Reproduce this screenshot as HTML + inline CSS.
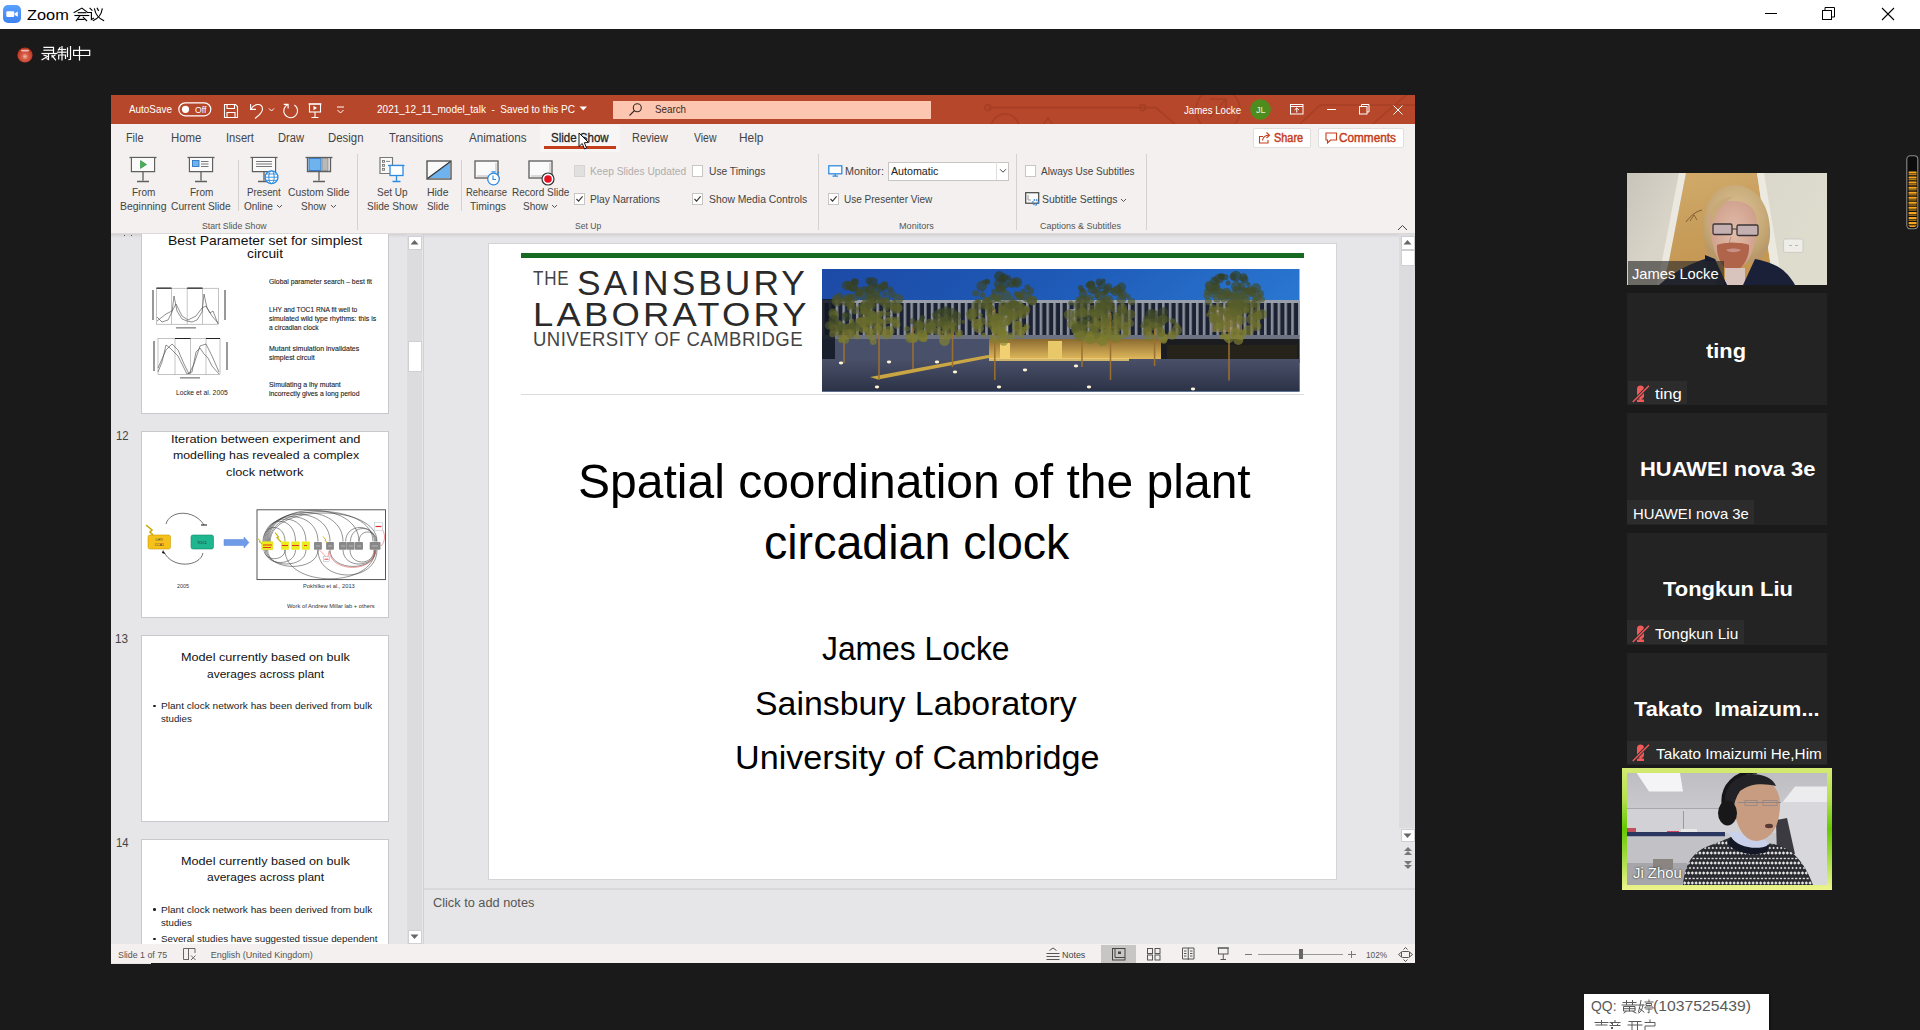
<!DOCTYPE html>
<html><head><meta charset="utf-8"><title>Zoom</title>
<style>
html,body{margin:0;padding:0;width:1920px;height:1030px;overflow:hidden;background:#1a1a1a;font-family:"Liberation Sans",sans-serif}
div,span,svg{position:absolute;display:block}
span{white-space:pre;transform-origin:0 0}
</style></head><body>
<div style="left:0px;top:0px;width:1920px;height:29px;background:#fff"></div>
<svg style="left:3px;top:5px;" width="18" height="18" viewBox="0 0 18 18"><defs><linearGradient id="zg" x1="0" y1="0" x2="0" y2="1"><stop offset="0" stop-color="#5aa0ff"/><stop offset="1" stop-color="#3d82f0"/></linearGradient></defs><rect x="0" y="0" width="18" height="18" rx="5" fill="url(#zg)"/><rect x="3.3" y="6.2" width="8" height="5.8" rx="1.3" fill="#fff"/><path d="M11.8 8.2 L14.8 6.4 V11.8 L11.8 10 Z" fill="#fff"/></svg>
<span style="left:27.2px;top:7.25px;font-size:15px;line-height:15px;color:#000;transform:scaleX(1.09);">Zoom</span>
<svg style="left:70px;top:2px;" width="40" height="26" viewBox="0 0 40 26"><g fill="none" stroke="#000" stroke-width="1.15" stroke-linecap="square"><path d="M4.1 10.5 L11.9 6.1 L17.7 10.5"/><path d="M8.3 10.7 H15.8"/><path d="M5 13.5 H18.7"/><path d="M9.5 14.2 L6.3 18.6"/><path d="M7.5 17.4 H14"/><path d="M13.3 15.3 L16.6 18.6"/><path d="M20 6.3 L22 8.3"/><path d="M17.6 10.5 H21.4 V17.5 L23.5 16.3"/><path d="M27.2 6.3 L28.4 8.4"/><path d="M24.5 7 C25.5 12 28 16 33.6 18.6"/><path d="M32.2 7 C31.5 12 29 16 23.3 18.6"/></g></svg>
<div style="left:1765px;top:13px;width:12px;height:1px;background:#000"></div>
<svg style="left:1822px;top:7px;" width="14" height="14" viewBox="0 0 14 14"><rect x="0.5" y="3.5" width="9" height="9" fill="none" stroke="#000" stroke-width="1"/><path d="M3 3.5 V0.5 H12.5 V10 H9.5" fill="none" stroke="#000" stroke-width="1"/></svg>
<svg style="left:1881px;top:7px;" width="14" height="14" viewBox="0 0 14 14"><path d="M1 1 L13 13 M13 1 L1 13" stroke="#000" stroke-width="1.1"/></svg>
<svg style="left:16px;top:46px;" width="18" height="18" viewBox="0 0 18 18"><defs><radialGradient id="rg" cx="0.5" cy="0.6" r="0.55"><stop offset="0" stop-color="#f0c0b0"/><stop offset="0.35" stop-color="#d9604a"/><stop offset="1" stop-color="#b8321e"/></radialGradient></defs><circle cx="9" cy="9" r="7.6" fill="url(#rg)"/><rect x="5" y="3.8" width="8" height="1.6" rx="0.8" fill="#f4d0c8" opacity="0.85"/></svg>
<svg style="left:38px;top:42px;" width="56" height="24" viewBox="0 0 56 24"><g fill="none" stroke="#fff" stroke-width="1.2" stroke-linecap="square"><path d="M6 5.3 H15.5 V11.5"/><path d="M6 8.2 H15.5"/><path d="M4 11.5 H18.8"/><path d="M10.5 11.5 V17.5 L9 16.8"/><path d="M6 13.2 L8.5 14"/><path d="M4 17.8 L9.5 14.5"/><path d="M17 13 L14 15"/><path d="M14 13.5 L17.5 17.8"/><path d="M22 5.5 L20.5 8"/><path d="M20.5 7.5 H27.5"/><path d="M19.5 10.2 H28"/><path d="M24 4.5 V17.8"/><path d="M20.7 17 V13 H27.5 V16.5"/><path d="M29.5 6 V14.5"/><path d="M32.5 4.5 V17.3 L31 17.5"/><path d="M35.6 8.4 H51.7 V13.5 H35.6 Z"/><path d="M41.5 4.8 V18"/></g></svg>
<div style="left:111px;top:95px;width:1304px;height:29px;background:#b7472a"></div>
<div style="left:111px;top:124px;width:1304px;height:110px;background:#f3f0ef"></div>
<div style="left:111px;top:234px;width:312px;height:711px;background:#e6e5e8"></div>
<div style="left:423px;top:234px;width:992px;height:711px;background:#e6e5e8"></div>
<div style="left:111px;top:944px;width:1304px;height:19px;background:#f3f0ef"></div>
<div style="left:111px;top:963px;width:40px;height:1px;background:#e8e4e2"></div>
<svg style="left:960px;top:95px;" width="455" height="29" viewBox="0 0 455 29"><g fill="none" stroke="#a63f25" stroke-width="1.6"><path d="M28 12.6 H182 L196 12.6 L215 29"/><circle cx="28" cy="12.6" r="3"/><circle cx="182.6" cy="12.6" r="3"/><circle cx="45" cy="33" r="14"/><path d="M82 31 L88 23 L94 31"/><circle cx="258" cy="15" r="22"/><path d="M250 4 H266 V20"/><path d="M266 4 L250 22"/><path d="M318 50 L360 10 H455"/><path d="M400 40 L452 -5"/><path d="M150 -2 L172 -10"/></g></svg>
<span style="left:129.4px;top:104.45px;font-size:11px;line-height:11px;color:#fff;transform:scaleX(0.9);">AutoSave</span>
<svg style="left:178px;top:102px;" width="34" height="15" viewBox="0 0 34 15"><rect x="0.8" y="0.8" width="32" height="13" rx="6.5" fill="none" stroke="#fff" stroke-width="1.2"/><circle cx="7.5" cy="7.3" r="3.6" fill="#fff"/></svg>
<span style="left:194.5px;top:105.22px;font-size:9.5px;line-height:9.5px;color:#fff;transform:scaleX(0.92);">Off</span>
<svg style="left:223px;top:103px;" width="16" height="16" viewBox="0 0 16 16"><g fill="none" stroke="#fff" stroke-width="1.1"><path d="M1.5 1.5 H12.5 L14.5 3.5 V14.5 H1.5 Z"/><path d="M4 1.5 V5.5 H11.5 V1.5"/><path d="M4 14.5 V9.5 H12 V14.5"/></g></svg>
<svg style="left:249px;top:103px;" width="16" height="17" viewBox="0 0 16 17"><g fill="none" stroke="#fff" stroke-width="1.1"><path d="M1.6 1 V6.4 H7"/><path d="M1.6 6.4 C5 0.5 13.5 -0.5 13.5 6 C13.5 9 10 12.5 6 15.5"/></g></svg>
<svg style="left:268px;top:107px;" width="7" height="6" viewBox="0 0 7 6"><path d="M1 1.5 L3.5 4 L6 1.5" fill="none" stroke="#fff" stroke-width="1"/></svg>
<svg style="left:282px;top:102px;" width="17" height="17" viewBox="0 0 17 17"><g fill="none" stroke="#fff" stroke-width="1.1"><path d="M6.1 2.4 A6.9 6.9 0 1 0 12.4 3"/><path d="M1.75 2.4 H6.1 V6.4"/></g></svg>
<svg style="left:308px;top:103px;" width="15" height="16" viewBox="0 0 15 16"><g fill="none" stroke="#fff" stroke-width="1.1"><path d="M0.5 1 H13.5"/><rect x="1.5" y="1" width="11" height="8"/><path d="M7 9 V14.5 M3.5 14.5 H10.5"/></g><path d="M5.5 2.8 L9 5 L5.5 7.2 Z" fill="#fff"/></svg>
<svg style="left:336px;top:105px;" width="9" height="10" viewBox="0 0 9 10"><path d="M1 2 H8" stroke="#fff" stroke-width="1"/><path d="M1.5 5 L4.5 8 L7.5 5" fill="none" stroke="#fff" stroke-width="1"/></svg>
<span style="left:377.3px;top:103.65px;font-size:11px;line-height:11px;color:#fff;transform:scaleX(0.91);">2021_12_11_model_talk  -  Saved to this PC</span>
<svg style="left:579px;top:106px;" width="9" height="6" viewBox="0 0 9 6"><path d="M0.5 0.5 H8 L4.25 4.5 Z" fill="#fff"/></svg>
<div style="left:612.5px;top:100.5px;width:318.5px;height:18.5px;background:#fdc6b1"></div>
<svg style="left:628px;top:102px;" width="15" height="15" viewBox="0 0 15 15"><g fill="none" stroke="#3a2a24" stroke-width="1.1"><circle cx="9.3" cy="5.7" r="4"/><path d="M6.5 8.5 L1.5 13.5"/></g></svg>
<span style="left:655px;top:104.15px;font-size:11px;line-height:11px;color:#3a2a24;transform:scaleX(0.89);">Search</span>
<span style="left:1184.3px;top:104.95px;font-size:11px;line-height:11px;color:#fff;transform:scaleX(0.88);">James Locke</span>
<svg style="left:1249.5px;top:99px;" width="21" height="21" viewBox="0 0 21 21"><circle cx="10.5" cy="10.5" r="10.3" fill="#4e8c1e"/></svg>
<span style="left:1255.5px;top:106.28px;font-size:8.5px;line-height:8.5px;color:#e8f0e0;transform:scaleX(1.06);">JL</span>
<svg style="left:1290px;top:104px;" width="14" height="11" viewBox="0 0 14 11"><g fill="none" stroke="#fff" stroke-width="1"><rect x="0.5" y="0.5" width="12.5" height="9.5"/><path d="M0.5 2.5 H13"/><path d="M6.75 8.5 V4 M4.5 6 L6.75 3.8 L9 6"/></g></svg>
<div style="left:1327px;top:109px;width:9px;height:1px;background:#fff"></div>
<svg style="left:1359px;top:104px;" width="11" height="11" viewBox="0 0 11 11"><g fill="none" stroke="#fff" stroke-width="1"><rect x="0.5" y="2.5" width="7.5" height="7.5"/><path d="M2.5 2.5 V0.5 H10 V8 H8"/></g></svg>
<svg style="left:1393px;top:105px;" width="10" height="10" viewBox="0 0 10 10"><path d="M0.5 0.5 L9.5 9.5 M9.5 0.5 L0.5 9.5" stroke="#fff" stroke-width="1"/></svg>
<div style="left:540px;top:125px;width:80px;height:27px;background:#f8f6f5"></div>
<span style="left:125.6px;top:131.7px;font-size:12px;line-height:12px;color:#444;transform:scaleX(0.9);">File</span>
<span style="left:170.6px;top:131.7px;font-size:12px;line-height:12px;color:#444;transform:scaleX(0.95);">Home</span>
<span style="left:226px;top:131.7px;font-size:12px;line-height:12px;color:#444;transform:scaleX(0.93);">Insert</span>
<span style="left:278px;top:131.7px;font-size:12px;line-height:12px;color:#444;transform:scaleX(0.93);">Draw</span>
<span style="left:328px;top:131.7px;font-size:12px;line-height:12px;color:#444;transform:scaleX(0.95);">Design</span>
<span style="left:389px;top:131.7px;font-size:12px;line-height:12px;color:#444;transform:scaleX(0.93);">Transitions</span>
<span style="left:468.75px;top:131.7px;font-size:12px;line-height:12px;color:#444;transform:scaleX(0.97);">Animations</span>
<span style="left:632px;top:131.7px;font-size:12px;line-height:12px;color:#444;transform:scaleX(0.91);">Review</span>
<span style="left:693.5px;top:131.7px;font-size:12px;line-height:12px;color:#444;transform:scaleX(0.87);">View</span>
<span style="left:738.5px;top:131.7px;font-size:12px;line-height:12px;color:#444;transform:scaleX(0.99);">Help</span>
<span style="left:550.8px;top:131.7px;font-size:12px;line-height:12px;color:#262626;transform:scaleX(0.96);-webkit-text-stroke:0.3px #262626;">Slide Show</span>
<div style="left:543.75px;top:145.8px;width:72.6px;height:3px;background:#c43e1c"></div>
<svg style="left:578px;top:132px;" width="12" height="19" viewBox="0 0 12 19"><path d="M1 1 V14.5 L4.2 11.5 L6.6 17 L8.6 16.1 L6.3 10.7 L10.5 10.5 Z" fill="#fff" stroke="#000" stroke-width="0.9" stroke-linejoin="round"/></svg>
<div style="left:1252.5px;top:127.5px;width:58px;height:20px;background:#fff;box-sizing:border-box;border:1px solid #e1dfdd;border-radius:2px"></div>
<svg style="left:1258px;top:131px;" width="14" height="13" viewBox="0 0 14 13"><g fill="none" stroke="#c43e1c" stroke-width="1.1"><path d="M5 5.5 H1.5 V12 H10 V9"/><path d="M4.5 9.5 C5 6 7.5 4.3 11 4.3"/><path d="M8.5 1.5 L11.5 4.3 L8.5 7"/></g></svg>
<span style="left:1274px;top:131.9px;font-size:12px;line-height:12px;color:#c43e1c;transform:scaleX(0.91);-webkit-text-stroke:0.45px #c43e1c;">Share</span>
<div style="left:1318.4px;top:127.5px;width:85.6px;height:20px;background:#fff;box-sizing:border-box;border:1px solid #e1dfdd;border-radius:2px"></div>
<svg style="left:1324.5px;top:132px;" width="13" height="13" viewBox="0 0 13 13"><path d="M1 1 H11.5 V8 H5.5 L2.5 11 V8 H1 Z" fill="none" stroke="#c43e1c" stroke-width="1.1"/></svg>
<span style="left:1339px;top:131.9px;font-size:12px;line-height:12px;color:#c43e1c;transform:scaleX(0.98);-webkit-text-stroke:0.45px #c43e1c;">Comments</span>
<svg style="left:129px;top:156px;" width="29" height="28" viewBox="0 0 29 28"><g fill="none" stroke="#5f5f5f" stroke-width="1.3"><path d="M0.5 1.5 H27.5"/><path d="M2.5 1.5 V15.5 H25.5 V1.5"/><path d="M14 15.5 V24.5 M8 25.5 H20"/></g><rect x="3" y="2" width="22" height="13" fill="#fafafa"/><path d="M11.5 4.6 L17.5 8.5 L11.5 12.4 Z" fill="#45b058" stroke="#2e8a3e" stroke-width="0.6"/></svg>
<span style="left:131.5px;top:187.25px;font-size:11px;line-height:11px;color:#444;transform:scaleX(0.91);">From</span>
<span style="left:120.2px;top:201.15px;font-size:11px;line-height:11px;color:#444;transform:scaleX(0.95);">Beginning</span>
<svg style="left:186.5px;top:156px;" width="29" height="28" viewBox="0 0 29 28"><g fill="none" stroke="#5f5f5f" stroke-width="1.3"><path d="M0.5 1.5 H27.5"/><path d="M2.5 1.5 V15.5 H25.5 V1.5"/><path d="M14 15.5 V24.5 M8 25.5 H20"/></g><rect x="3" y="2" width="22" height="13" fill="#fafafa"/><rect x="5.5" y="4.5" width="6.5" height="6" fill="#6fb3ee" stroke="#2f76c3" stroke-width="0.9"/><path d="M14 5.5 H21.5 M14 8 H21.5 M14 10.5 H21.5" stroke="#6a6a6a" stroke-width="0.9"/></svg>
<span style="left:189.5px;top:187.25px;font-size:11px;line-height:11px;color:#444;transform:scaleX(0.91);">From</span>
<span style="left:171.2px;top:201.15px;font-size:11px;line-height:11px;color:#444;transform:scaleX(0.93);">Current Slide</span>
<div style="left:237.5px;top:160px;width:1px;height:50.5px;background:#d4d2d0"></div>
<svg style="left:249.5px;top:156px;" width="32" height="29" viewBox="0 0 32 29"><g fill="none" stroke="#5f5f5f" stroke-width="1.3"><path d="M0.5 1.5 H27.5"/><path d="M2.5 1.5 V15.5 H25.5 V1.5"/><path d="M14 15.5 V24.5 M8 25.5 H18"/></g><rect x="3" y="2" width="22" height="13" fill="#fafafa"/><path d="M6 5.5 H22 M6 8 H22 M6 10.5 H22" stroke="#6a6a6a" stroke-width="0.9"/><circle cx="21.5" cy="21.2" r="6.4" fill="#fff" stroke="#2f8be0" stroke-width="1.3"/><path d="M15.1 21.2 H27.9 M16.4 18 H26.6 M16.4 24.4 H26.6" stroke="#2f8be0" stroke-width="0.9"/><ellipse cx="21.5" cy="21.2" rx="2.7" ry="6.4" fill="none" stroke="#2f8be0" stroke-width="1"/></svg>
<span style="left:246.7px;top:187.25px;font-size:11px;line-height:11px;color:#444;transform:scaleX(0.89);">Present</span>
<span style="left:243.5px;top:201.15px;font-size:11px;line-height:11px;color:#444;transform:scaleX(0.91);">Online</span>
<svg style="left:276px;top:204px;" width="7" height="5" viewBox="0 0 7 5"><path d="M1 1 L3.5 3.5 L6 1" fill="none" stroke="#555" stroke-width="1"/></svg>
<svg style="left:304.5px;top:156px;" width="29" height="28" viewBox="0 0 29 28"><g fill="none" stroke="#5f5f5f" stroke-width="1.3"><path d="M0.5 1.5 H27.5"/><path d="M2.5 1.5 V15.5 H25.5 V1.5"/><path d="M14 15.5 V24.5 M8 25.5 H20"/></g><rect x="4" y="2.5" width="12" height="12" fill="#6fb3ee" stroke="#2f76c3" stroke-width="0.9"/><rect x="17" y="2.5" width="6" height="12" fill="#b9b9b9" stroke="#8a8a8a" stroke-width="0.8"/></svg>
<span style="left:287.7px;top:187.25px;font-size:11px;line-height:11px;color:#444;transform:scaleX(0.94);">Custom Slide</span>
<span style="left:300.8px;top:201.15px;font-size:11px;line-height:11px;color:#444;transform:scaleX(0.91);">Show</span>
<svg style="left:330px;top:204px;" width="7" height="5" viewBox="0 0 7 5"><path d="M1 1 L3.5 3.5 L6 1" fill="none" stroke="#555" stroke-width="1"/></svg>
<span style="left:201.8px;top:222.05px;font-size:9px;line-height:9px;color:#555;transform:scaleX(0.97);">Start Slide Show</span>
<div style="left:357.3px;top:154px;width:1px;height:76px;background:#d4d2d0"></div>
<svg style="left:379px;top:156px;" width="27" height="27" viewBox="0 0 27 27"><path d="M1 1.5 H13.5 V17.5 H1 Z" fill="#fafafa" stroke="#777" stroke-width="1.2"/><g fill="none" stroke="#777" stroke-width="0.9"><rect x="3.5" y="4.5" width="2" height="1.8"/><rect x="3.5" y="8.5" width="2" height="1.8"/><rect x="3.5" y="12.5" width="2" height="1.8"/><path d="M7 5.4 H11"/></g><g fill="none" stroke="#2f8be0" stroke-width="1.3"><path d="M9 9.5 H25.5"/><rect x="11" y="9.5" width="13" height="10" fill="#fff"/><path d="M17.5 19.5 V25 M13.5 25.5 H21.5"/></g></svg>
<span style="left:377px;top:187.25px;font-size:11px;line-height:11px;color:#444;transform:scaleX(0.91);">Set Up</span>
<span style="left:367.4px;top:201.15px;font-size:11px;line-height:11px;color:#444;transform:scaleX(0.92);">Slide Show</span>
<svg style="left:425.5px;top:159.5px;" width="26" height="20" viewBox="0 0 26 20"><rect x="1" y="1" width="24" height="18" fill="#fafafa" stroke="#555" stroke-width="1.4"/><path d="M2 18 L24 2 V18 Z" fill="#6fb3ee"/><path d="M1.5 18.5 L24.5 1.5" stroke="#333" stroke-width="1.2"/></svg>
<span style="left:427.3px;top:187.25px;font-size:11px;line-height:11px;color:#444;transform:scaleX(0.95);">Hide</span>
<span style="left:427.3px;top:201.15px;font-size:11px;line-height:11px;color:#444;transform:scaleX(0.9);">Slide</span>
<div style="left:460.5px;top:160px;width:1px;height:50.5px;background:#d4d2d0"></div>
<svg style="left:474px;top:159.5px;" width="30" height="26" viewBox="0 0 30 26"><rect x="1" y="1" width="23" height="17" fill="#fafafa" stroke="#666" stroke-width="1.4"/><path d="M3 16 H22 V3" fill="none" stroke="#bbb" stroke-width="1"/><circle cx="19.5" cy="19" r="5.8" fill="#fff" stroke="#2f8be0" stroke-width="1.3"/><path d="M19 15.5 V19.5 H22" fill="none" stroke="#2f8be0" stroke-width="1.1"/><path d="M17.5 11.8 H21.5 M23.5 13.5 L25 12" stroke="#2f8be0" stroke-width="1.2"/></svg>
<span style="left:466.3px;top:187.25px;font-size:11px;line-height:11px;color:#444;transform:scaleX(0.86);">Rehearse</span>
<span style="left:469.6px;top:201.15px;font-size:11px;line-height:11px;color:#444;transform:scaleX(0.94);">Timings</span>
<svg style="left:527.5px;top:159.5px;" width="30" height="26" viewBox="0 0 30 26"><rect x="1" y="1" width="23" height="17" fill="#fafafa" stroke="#666" stroke-width="1.4"/><path d="M3 16 H22 V3" fill="none" stroke="#bbb" stroke-width="1"/><circle cx="20" cy="19" r="6" fill="#fff" stroke="#333" stroke-width="1.2"/><circle cx="20" cy="19" r="3.8" fill="#e81123"/></svg>
<span style="left:511.9px;top:187.25px;font-size:11px;line-height:11px;color:#444;transform:scaleX(0.91);">Record Slide</span>
<span style="left:523px;top:201.15px;font-size:11px;line-height:11px;color:#444;transform:scaleX(0.91);">Show</span>
<svg style="left:551px;top:204px;" width="7" height="5" viewBox="0 0 7 5"><path d="M1 1 L3.5 3.5 L6 1" fill="none" stroke="#555" stroke-width="1"/></svg>
<div style="left:573.75px;top:165.2px;width:11px;height:11.5px;background:#e2e0df;box-sizing:border-box;border:1px solid #d6d4d3"></div>
<span style="left:589.5px;top:166.05px;font-size:11px;line-height:11px;color:#b0aeac;transform:scaleX(0.93);">Keep Slides Updated</span>
<div style="left:692.4px;top:165.2px;width:11px;height:11.5px;background:#fff;box-sizing:border-box;border:1px solid #c8c6c4"></div>
<span style="left:708.7px;top:166.05px;font-size:11px;line-height:11px;color:#444;transform:scaleX(0.93);">Use Timings</span>
<div style="left:573.75px;top:193.2px;width:11px;height:11.5px;background:#fff;box-sizing:border-box;border:1px solid #c8c6c4"></div>
<svg style="left:573.75px;top:193.2px;" width="11" height="11.5" viewBox="0 0 11 11.5"><path d="M2.5 6 L4.6 8.2 L8.6 3.4" fill="none" stroke="#333" stroke-width="1.1"/></svg>
<span style="left:589.5px;top:194.05px;font-size:11px;line-height:11px;color:#444;transform:scaleX(0.93);">Play Narrations</span>
<div style="left:692.4px;top:193.2px;width:11px;height:11.5px;background:#fff;box-sizing:border-box;border:1px solid #c8c6c4"></div>
<svg style="left:692.4px;top:193.2px;" width="11" height="11.5" viewBox="0 0 11 11.5"><path d="M2.5 6 L4.6 8.2 L8.6 3.4" fill="none" stroke="#333" stroke-width="1.1"/></svg>
<span style="left:708.7px;top:194.05px;font-size:11px;line-height:11px;color:#444;transform:scaleX(0.94);">Show Media Controls</span>
<span style="left:575px;top:222.05px;font-size:9px;line-height:9px;color:#555;transform:scaleX(0.95);">Set Up</span>
<div style="left:818.3px;top:154px;width:1px;height:76px;background:#d4d2d0"></div>
<svg style="left:827.5px;top:165px;" width="15" height="12" viewBox="0 0 15 12"><rect x="0.8" y="0.8" width="13" height="8" fill="#fff" stroke="#2f8be0" stroke-width="1.3"/><path d="M7.2 9 V11 M4.5 11.2 H10" stroke="#2f8be0" stroke-width="1.3"/></svg>
<span style="left:845px;top:165.65px;font-size:11px;line-height:11px;color:#444;transform:scaleX(0.98);">Monitor:</span>
<div style="left:887.9px;top:161.5px;width:121px;height:19.3px;background:#fff;box-sizing:border-box;border:1px solid #c8c6c4"></div>
<div style="left:996.2px;top:162px;width:1px;height:18.3px;background:#e0dedd"></div>
<svg style="left:999px;top:168px;" width="8" height="6" viewBox="0 0 8 6"><path d="M1 1.2 L4 4.2 L7 1.2" fill="none" stroke="#444" stroke-width="1"/></svg>
<span style="left:890.5px;top:165.65px;font-size:11px;line-height:11px;color:#222;transform:scaleX(0.97);">Automatic</span>
<div style="left:828px;top:193.2px;width:11px;height:11.5px;background:#fff;box-sizing:border-box;border:1px solid #c8c6c4"></div>
<svg style="left:828px;top:193.2px;" width="11" height="11.5" viewBox="0 0 11 11.5"><path d="M2.5 6 L4.6 8.2 L8.6 3.4" fill="none" stroke="#333" stroke-width="1.1"/></svg>
<span style="left:844.3px;top:194.05px;font-size:11px;line-height:11px;color:#444;transform:scaleX(0.91);">Use Presenter View</span>
<span style="left:899px;top:222.05px;font-size:9px;line-height:9px;color:#555;transform:scaleX(1.01);">Monitors</span>
<div style="left:1015.5px;top:154px;width:1px;height:76px;background:#d4d2d0"></div>
<div style="left:1025px;top:165.2px;width:11px;height:11.5px;background:#fff;box-sizing:border-box;border:1px solid #c8c6c4"></div>
<span style="left:1041.25px;top:166.05px;font-size:11px;line-height:11px;color:#444;transform:scaleX(0.91);">Always Use Subtitles</span>
<svg style="left:1024.5px;top:192px;" width="15" height="14" viewBox="0 0 15 14"><rect x="0.7" y="0.7" width="13" height="10.5" fill="#fafafa" stroke="#444" stroke-width="1.2"/><path d="M3 3 V8 H6" fill="none" stroke="#888" stroke-width="0.8"/><circle cx="10.5" cy="10.3" r="2.6" fill="none" stroke="#2f8be0" stroke-width="1.5" stroke-dasharray="1.6 0.9"/></svg>
<span style="left:1041.9px;top:194.05px;font-size:11px;line-height:11px;color:#444;transform:scaleX(0.95);">Subtitle Settings</span>
<svg style="left:1120px;top:198px;" width="7" height="5" viewBox="0 0 7 5"><path d="M1 1 L3.5 3.5 L6 1" fill="none" stroke="#555" stroke-width="1"/></svg>
<span style="left:1040px;top:222.05px;font-size:9px;line-height:9px;color:#555;transform:scaleX(1);">Captions &amp; Subtitles</span>
<div style="left:1145.8px;top:154px;width:1px;height:76px;background:#d4d2d0"></div>
<svg style="left:1397px;top:224px;" width="11" height="7" viewBox="0 0 11 7"><path d="M1 6 L5.5 1.5 L10 6" fill="none" stroke="#444" stroke-width="1"/></svg>
<div style="left:111px;top:233px;width:1304px;height:1px;background:#dcdad9"></div>
<div style="left:111px;top:234px;width:1304px;height:4px;background:linear-gradient(#d3d2d5,rgba(230,229,232,0))"></div>
<div style="left:111px;top:234px;width:296px;height:710px;overflow:hidden">
<div style="left:30px;top:-7px;width:248px;height:187px;background:#fff;box-sizing:border-box;border:1px solid #c9c8cb"></div>
<div style="left:30px;top:197px;width:248px;height:187px;background:#fff;box-sizing:border-box;border:1px solid #c9c8cb"></div>
<div style="left:30px;top:401px;width:248px;height:187px;background:#fff;box-sizing:border-box;border:1px solid #c9c8cb"></div>
<div style="left:30px;top:605px;width:248px;height:187px;background:#fff;box-sizing:border-box;border:1px solid #c9c8cb"></div>
<span style="left:4.5px;top:194.95px;font-size:13px;line-height:13px;color:#444;transform:scaleX(0.87);">12</span>
<span style="left:4px;top:398.45px;font-size:13px;line-height:13px;color:#444;transform:scaleX(0.9);">13</span>
<span style="left:4.5px;top:602.45px;font-size:13px;line-height:13px;color:#444;transform:scaleX(0.87);">14</span>
<div style="left:12.5px;top:0.5px;width:1.2px;height:1.2px;background:#555"></div>
<div style="left:19.5px;top:0.5px;width:1.2px;height:1.2px;background:#555"></div>
<span style="left:57.25px;top:-0.05px;font-size:13px;line-height:13px;color:#111;transform:scaleX(1.07);">Best Parameter set for simplest</span>
<span style="left:136px;top:12.95px;font-size:13px;line-height:13px;color:#111;transform:scaleX(1.06);">circuit</span>
<span style="left:157.8px;top:45.16px;font-size:6.4px;line-height:6.4px;color:#222;transform:scaleX(1.07);-webkit-text-stroke:0.1px #222;">Global parameter search – best fit</span>
<span style="left:157.8px;top:72.96px;font-size:6.4px;line-height:6.4px;color:#222;transform:scaleX(1.04);-webkit-text-stroke:0.1px #222;">LHY and TOC1 RNA fit well to</span>
<span style="left:157.8px;top:82.06px;font-size:6.4px;line-height:6.4px;color:#222;transform:scaleX(1.09);-webkit-text-stroke:0.1px #222;">simulated wild type rhythms: this is</span>
<span style="left:157.8px;top:90.96px;font-size:6.4px;line-height:6.4px;color:#222;transform:scaleX(1.05);-webkit-text-stroke:0.1px #222;">a circadian clock</span>
<span style="left:157.8px;top:111.76px;font-size:6.4px;line-height:6.4px;color:#222;transform:scaleX(1.1);-webkit-text-stroke:0.1px #222;">Mutant simulation invalidates</span>
<span style="left:157.8px;top:120.86px;font-size:6.4px;line-height:6.4px;color:#222;transform:scaleX(1.09);-webkit-text-stroke:0.1px #222;">simplest circuit</span>
<span style="left:157.8px;top:148.26px;font-size:6.4px;line-height:6.4px;color:#222;transform:scaleX(1.08);-webkit-text-stroke:0.1px #222;">Simulating a lhy mutant</span>
<span style="left:157.8px;top:157.36px;font-size:6.4px;line-height:6.4px;color:#222;transform:scaleX(1.07);-webkit-text-stroke:0.1px #222;">incorrectly gives a long period</span>
<span style="left:65px;top:154.55px;font-size:7px;line-height:7px;color:#222;transform:scaleX(0.97);">Locke et al. 2005</span>
<svg style="left:41px;top:52px;" width="90" height="100" viewBox="0 0 90 100"><g fill="none" stroke="#888" stroke-width="0.5"><rect x="4.5" y="2.2" width="62" height="36"/><path d="M19.5 2.2 V38.2 M35.2 2.2 V38.2 M50.5 2.2 V38.2"/><rect x="6" y="52.5" width="62" height="36"/><path d="M23 52.5 V88.5 M38.5 52.5 V88.5 M54 52.5 V88.5"/></g><path d="M4.5 2.2 H19.5 M35.2 2.2 H50.5" stroke="#222" stroke-width="1.2"/><path d="M23 52.5 H38.5 M54 52.5 H68" stroke="#222" stroke-width="1.2"/><g fill="none" stroke="#444" stroke-width="0.6"><path d="M5 31 L10 36 L16 34 L20 26 L22 10 L25 25 L30 33 L35 35 L40 36 L45 34 L50 26 L52 8 L55 22 L58 27 L61 25 L66 38"/><path d="M5 35 L14 28 L20 25 L24 18 L30 30 L36 34 L44 30 L50 22 L54 20 L60 30 L66 37"/><path d="M6 86 L10 76 L14 59 L18 62 L22 66 L26 70 L30 78 L35 88 L40 86 L44 66 L48 62 L52 68 L56 72 L60 80 L67 88"/><path d="M6 82 L14 64 L20 58 L26 64 L32 78 L37 88 L42 78 L48 60 L54 58 L60 70 L67 86"/></g><g fill="#999"><rect x="0" y="4" width="2" height="30"/><rect x="72" y="4" width="2" height="30"/><rect x="1" y="55" width="2" height="30"/><rect x="74" y="56" width="2" height="28"/><rect x="24" y="41" width="20" height="1.6"/><rect x="28" y="91" width="20" height="1.6"/></g></svg>
<span style="left:59.7px;top:199.72px;font-size:11.5px;line-height:11.5px;color:#111;transform:scaleX(1.11);">Iteration between experiment and</span>
<span style="left:61.7px;top:216.03px;font-size:11.5px;line-height:11.5px;color:#111;transform:scaleX(1.07);">modelling has revealed a complex</span>
<span style="left:115.4px;top:232.53px;font-size:11.5px;line-height:11.5px;color:#111;transform:scaleX(1.11);">clock network</span>
<svg style="left:33px;top:271px;" width="245" height="80" viewBox="0 0 245 80"><path d="M22 19 C26 5 50 4 60 20" fill="none" stroke="#333" stroke-width="0.7"/><path d="M57 20 H63" stroke="#111" stroke-width="1"/><path d="M59 48 C56 62 28 64 20 47" fill="none" stroke="#333" stroke-width="0.7"/><path d="M19 45 L21 49 L18 48Z" fill="#111"/><rect x="4" y="30" width="22.5" height="14" rx="2" fill="#f6c11a" stroke="#c99a00" stroke-width="0.6"/><rect x="47" y="30" width="22.5" height="14" rx="2" fill="#1db68f" stroke="#138a6a" stroke-width="0.6"/><path d="M2 20 L8 25 L6 27 L9 30" fill="none" stroke="#c9a800" stroke-width="1.6"/><text x="15.3" y="36" font-size="3.4" text-anchor="middle" fill="#333" font-family="Liberation Sans">LHY/</text><text x="15.3" y="40.5" font-size="3.4" text-anchor="middle" fill="#333" font-family="Liberation Sans">CCA1</text><text x="58" y="38.5" font-size="3.6" text-anchor="middle" fill="#222" font-family="Liberation Sans">TOC1</text><path d="M80 34.5 H100 V32 L105 37.5 L100 43 V40.5 H80 Z" fill="#6f9ae8" stroke="#5a86d8" stroke-width="0.5"/><rect x="113" y="4.8" width="128.5" height="69.8" fill="#fff" stroke="#444" stroke-width="0.9"/><g fill="none" stroke="#3a3a3a" stroke-width="0.55"><path d="M119.0 36.5 C119.0 17.8 141.0 17.8 141.0 36.5"/><path d="M119.9 36.5 C119.9 9.6 151.5 9.6 151.5 36.5"/><path d="M120.8 36.5 C120.8 6.5 162.0 6.5 162.0 36.5"/><path d="M121.7 36.5 C121.7 3.4 174.0 3.4 174.0 36.5"/><path d="M122.6 36.5 C122.6 0.2 186.0 0.2 186.0 36.5"/><path d="M123.5 36.5 C123.5 -2.3 199.0 -2.3 199.0 36.5"/><path d="M124.4 36.5 C124.4 -5.0 215.0 -5.0 215.0 36.5"/><path d="M125.3 36.5 C125.3 -3.5 229.0 -3.5 229.0 36.5"/><path d="M126.2 36.5 C126.2 -1.5 233.0 -1.5 233.0 36.5"/><path d="M120.0 44.7 C120.0 56.6 141.0 56.6 141.0 44.7"/><path d="M121.2 44.7 C121.2 61.8 151.5 61.8 151.5 44.7"/><path d="M122.4 44.7 C122.4 63.8 162.0 63.8 162.0 44.7"/><path d="M123.6 44.7 C123.6 67.0 174.0 67.0 174.0 44.7"/><path d="M141.0 44.7 C141.0 83.5 231.0 83.5 231.0 44.7"/><path d="M174.0 44.7 C174.0 78.4 233.0 78.4 233.0 44.7"/><path d="M186.0 44.7 C186.0 67.0 232.0 67.0 232.0 44.7"/><path d="M199.0 44.7 C199.0 63.8 231.0 63.8 231.0 44.7"/><path d="M206.0 44.7 C206.0 61.1 230.0 61.1 230.0 44.7"/><path d="M201.6 36.5 C201.6 17.8 230.5 17.8 230.5 36.5"/><path d="M206.5 36.5 C206.5 19.2 231.5 19.2 231.5 36.5"/><path d="M215.0 36.5 C215.0 23.8 232.5 23.8 232.5 36.5"/></g><path d="M238 24 C242 30 241 36 237.3 41" fill="none" stroke="#e84040" stroke-width="0.5"/><path d="M231 45.8 C231 68 186 68 185.3 45.8" fill="none" stroke="#e84040" stroke-width="0.5"/><path d="M182 51.7 L176 45.5 M184 51.7 L185 46" fill="none" stroke="#e84040" stroke-width="0.5"/><rect x="117.7" y="36.5" width="11.2" height="8.2" rx="0.8" fill="#ecec1a" stroke="#b0b000" stroke-width="0.3"/><rect x="137" y="36.5" width="7.9" height="8.2" rx="0.8" fill="#ecec1a"/><rect x="147.2" y="36.5" width="8.5" height="8.2" rx="0.8" fill="#ecec1a"/><rect x="157.7" y="36.5" width="8.1" height="8.2" rx="0.8" fill="#ecec1a"/><path d="M119 40 H128 M119 42.5 H127 M138 40.5 H144 M148 40.5 H155 M160 40.5 H163" stroke="#e02020" stroke-width="0.9"/><rect x="170" y="37.1" width="7.9" height="7.6" rx="0.8" fill="#888"/><rect x="182.1" y="37.1" width="7.8" height="7.6" rx="0.8" fill="#888"/><rect x="195" y="37.1" width="7.7" height="7.6" rx="0.8" fill="#888"/><rect x="202.7" y="37.1" width="7.8" height="7.6" rx="0.8" fill="#8a8a8a"/><rect x="210.9" y="37.1" width="8.1" height="7.6" rx="0.8" fill="#888"/><rect x="225.7" y="37.1" width="10.8" height="7.6" rx="0.8" fill="#888"/><path d="M172 41 H176 M184 41 H188 M197 41 H201 M205 41 H209 M213 41 H217 M228 41 H234" stroke="#ccc" stroke-width="0.7"/><path d="M113 33 L116.5 36 L115 36.5 L118 39" fill="none" stroke="#c8b400" stroke-width="1"/><path d="M131 27.5 L134.5 32 L133 32.5 L137 37" fill="none" stroke="#c8b400" stroke-width="1.2"/><path d="M179 31.5 L182 35 L181 35.5 L183.5 38" fill="none" stroke="#c8b400" stroke-width="0.9"/><rect x="230.3" y="17.5" width="8.2" height="7.8" fill="#fff" stroke="#9ab" stroke-width="0.4"/><path d="M231.5 21.5 H237.5" stroke="#e03030" stroke-width="1.2"/><rect x="179.4" y="51.7" width="6.2" height="5" fill="#fff" stroke="#99a" stroke-width="0.4"/><path d="M180.5 54.2 H184.5" stroke="#e04040" stroke-width="1"/></svg>
<span style="left:65.7px;top:349.75px;font-size:5px;line-height:5px;color:#333;transform:scaleX(1.07);">2005</span>
<span style="left:192px;top:349.75px;font-size:5px;line-height:5px;color:#333;transform:scaleX(1.15);">Pokhilko et al., 2013</span>
<span style="left:175.7px;top:370.08px;font-size:5.2px;line-height:5.2px;color:#333;transform:scaleX(1.11);">Work of Andrew Millar lab + others</span>
<span style="left:70.2px;top:418.43px;font-size:11.5px;line-height:11.5px;color:#111;transform:scaleX(1.1);">Model currently based on bulk</span>
<span style="left:95.5px;top:434.93px;font-size:11.5px;line-height:11.5px;color:#111;transform:scaleX(1.04);">averages across plant</span>
<div style="left:42px;top:470.5px;width:2.5px;height:2.5px;background:#222;border-radius:50%"></div>
<span style="left:50.3px;top:468.35px;font-size:9px;line-height:9px;color:#222;transform:scaleX(1.12);">Plant clock network has been derived from bulk</span>
<span style="left:50.3px;top:481.35px;font-size:9px;line-height:9px;color:#222;transform:scaleX(1.08);">studies</span>
<span style="left:70.3px;top:622.02px;font-size:11.5px;line-height:11.5px;color:#111;transform:scaleX(1.1);">Model currently based on bulk</span>
<span style="left:95.7px;top:638.43px;font-size:11.5px;line-height:11.5px;color:#111;transform:scaleX(1.04);">averages across plant</span>
<div style="left:42px;top:674px;width:2.5px;height:2.5px;background:#222;border-radius:50%"></div>
<span style="left:50.3px;top:671.65px;font-size:9px;line-height:9px;color:#222;transform:scaleX(1.12);">Plant clock network has been derived from bulk</span>
<span style="left:50.3px;top:684.65px;font-size:9px;line-height:9px;color:#222;transform:scaleX(1.08);">studies</span>
<div style="left:42px;top:703.5px;width:2.5px;height:2.5px;background:#222;border-radius:50%"></div>
<span style="left:49.8px;top:700.85px;font-size:9px;line-height:9px;color:#222;transform:scaleX(1.09);">Several studies have suggested tissue dependent</span>
</div>
<div style="left:407.3px;top:234px;width:14.5px;height:710px;background:#dcdbdd"></div>
<div style="left:407.5px;top:235.7px;width:14px;height:14px;background:#fff;box-sizing:border-box;border:1px solid #d0cfd2"></div>
<svg style="left:410px;top:239px;" width="9" height="6" viewBox="0 0 9 6"><path d="M0.5 5.5 L4.5 1 L8.5 5.5 Z" fill="#666"/></svg>
<div style="left:407.5px;top:341px;width:14px;height:31px;background:#fff;box-sizing:border-box;border:1px solid #d0cfd2"></div>
<div style="left:407.5px;top:930px;width:14px;height:13.5px;background:#fff;box-sizing:border-box;border:1px solid #d0cfd2"></div>
<svg style="left:410px;top:934px;" width="9" height="6" viewBox="0 0 9 6"><path d="M0.5 0.5 L4.5 5 L8.5 0.5 Z" fill="#666"/></svg>
<div style="left:423px;top:234px;width:1px;height:710px;background:#d2d1d4"></div>
<div style="left:488px;top:243px;width:849px;height:637px;background:#fff;box-sizing:border-box;border:1px solid #d4d3d6"></div>
<div style="left:521px;top:253.3px;width:783px;height:4.6px;background:#166a22"></div>
<div style="left:521px;top:393.5px;width:783px;height:1px;background:#dcdcdc"></div>
<span style="left:533.3px;top:267.57px;font-size:20.5px;line-height:20.5px;color:#444;letter-spacing:1px;transform:scaleX(0.83);">THE</span>
<span style="left:576.7px;top:265.25px;font-size:35px;line-height:35px;color:#2a2a2a;letter-spacing:3px;transform:scaleX(1.01);">SAINSBURY</span>
<span style="left:532.5px;top:296.9px;font-size:34px;line-height:34px;color:#2a2a2a;letter-spacing:3px;transform:scaleX(1.07);">LABORATORY</span>
<span style="left:532.5px;top:330.12px;font-size:19.5px;line-height:19.5px;color:#444;letter-spacing:0.5px;transform:scaleX(0.95);">UNIVERSITY OF CAMBRIDGE</span>
<svg style="left:822.3px;top:269.2px;" width="477.5" height="122.5" viewBox="0 0 477.5 122.5"><defs><linearGradient id="sky" x1="0" y1="0" x2="1" y2="0.3"><stop offset="0" stop-color="#1c4aa6"/><stop offset="0.5" stop-color="#1f5bb8"/><stop offset="1" stop-color="#2a78d2"/></linearGradient><linearGradient id="gnd" x1="0" y1="0" x2="0" y2="1"><stop offset="0" stop-color="#4a5068"/><stop offset="1" stop-color="#2c3246"/></linearGradient><pattern id="cols" x="0" y="0" width="6.8" height="40" patternUnits="userSpaceOnUse"><rect width="6.8" height="40" fill="#1b2233"/><rect x="0" width="2.6" height="40" fill="#8c909a"/></pattern><linearGradient id="glow" x1="0" y1="0" x2="0" y2="1"><stop offset="0" stop-color="#8a6a30"/><stop offset="1" stop-color="#e8c060"/></linearGradient><radialGradient id="tree" cx="0.5" cy="0.6" r="0.6"><stop offset="0" stop-color="#7a8a3a"/><stop offset="0.6" stop-color="#4e5e2c"/><stop offset="1" stop-color="#2f3d28" stop-opacity="0.85"/></radialGradient></defs><rect width="477.5" height="122.5" fill="url(#sky)"/><rect x="0" y="32" width="477.5" height="36" fill="url(#cols)"/><rect x="0" y="31" width="477.5" height="3" fill="#9aa0ab"/><rect x="180" y="38" width="6" height="24" fill="#c8d0d8" opacity="0.6"/><rect x="248" y="40" width="5" height="20" fill="#d8dde0" opacity="0.5"/><rect x="390" y="38" width="30" height="25" fill="#b09a60" opacity="0.55"/><rect x="0" y="66" width="477.5" height="4" fill="#6c7282"/><rect x="0" y="70" width="170" height="22" fill="#48506a"/><rect x="167" y="70" width="172" height="22" fill="url(#glow)"/><rect x="226" y="72" width="14" height="20" fill="#e8c868"/><rect x="178" y="74" width="10" height="18" fill="#f0d070"/><rect x="339" y="70" width="138.5" height="24" fill="#1a1c20"/><rect x="345" y="76" width="130" height="18" fill="#25231a"/><rect x="0" y="30" width="13" height="62" fill="#121822" opacity="0.85"/><rect x="0" y="90" width="477.5" height="32.5" fill="url(#gnd)"/><rect x="167" y="89" width="140" height="3" fill="#f0d070" opacity="0.8"/><path d="M48 108 L166 86 L172 88 L56 110.5 Z" fill="#d8b040" opacity="0.9"/><path d="M57 42 V111" stroke="#9a7030" stroke-width="1.5"/><circle cx="40.1" cy="51.2" r="4.3" fill="#666a2d" opacity="0.66"/><circle cx="66.0" cy="51.7" r="3.3" fill="#676a2d" opacity="0.66"/><circle cx="66.1" cy="49.6" r="2.1" fill="#64682d" opacity="0.66"/><circle cx="38.7" cy="44.6" r="2.3" fill="#5d622c" opacity="0.66"/><circle cx="18.0" cy="55.0" r="2.4" fill="#6c6e2e" opacity="0.66"/><circle cx="49.3" cy="65.9" r="5.3" fill="#7b7b30" opacity="0.66"/><circle cx="27.7" cy="33.4" r="5.4" fill="#4d552a" opacity="0.66"/><circle cx="74.7" cy="50.4" r="3.0" fill="#65692d" opacity="0.66"/><circle cx="50.8" cy="49.0" r="3.1" fill="#63672d" opacity="0.66"/><circle cx="49.9" cy="31.5" r="4.0" fill="#4b532a" opacity="0.66"/><circle cx="32.9" cy="28.4" r="3.9" fill="#464f29" opacity="0.66"/><circle cx="50.8" cy="44.3" r="2.7" fill="#5d622c" opacity="0.66"/><circle cx="36.3" cy="24.6" r="3.1" fill="#414b28" opacity="0.66"/><circle cx="26.8" cy="31.8" r="3.0" fill="#4b532a" opacity="0.66"/><circle cx="52.5" cy="17.2" r="2.9" fill="#374227" opacity="0.66"/><circle cx="24.4" cy="32.2" r="5.1" fill="#4c542a" opacity="0.66"/><circle cx="42.9" cy="27.0" r="5.4" fill="#444d29" opacity="0.66"/><circle cx="59.9" cy="54.8" r="4.6" fill="#6c6e2e" opacity="0.66"/><circle cx="57.8" cy="59.0" r="2.1" fill="#71732f" opacity="0.66"/><circle cx="30.8" cy="18.3" r="4.0" fill="#384327" opacity="0.66"/><circle cx="57.0" cy="30.7" r="4.4" fill="#4a5229" opacity="0.66"/><circle cx="24.7" cy="29.1" r="3.6" fill="#475029" opacity="0.66"/><circle cx="62.6" cy="15.9" r="3.7" fill="#354027" opacity="0.66"/><circle cx="41.7" cy="36.9" r="4.5" fill="#52592b" opacity="0.66"/><circle cx="24.6" cy="16.6" r="4.9" fill="#364127" opacity="0.66"/><circle cx="40.9" cy="59.6" r="4.3" fill="#72742f" opacity="0.66"/><circle cx="66.2" cy="44.8" r="2.6" fill="#5d622c" opacity="0.66"/><circle cx="49.6" cy="45.9" r="4.7" fill="#5f642c" opacity="0.66"/><circle cx="55.1" cy="52.1" r="3.4" fill="#686b2d" opacity="0.66"/><circle cx="50.2" cy="36.9" r="3.6" fill="#52592b" opacity="0.66"/><circle cx="14.9" cy="32.9" r="4.9" fill="#4d542a" opacity="0.66"/><circle cx="55.4" cy="30.8" r="3.5" fill="#4a5229" opacity="0.66"/><circle cx="25.1" cy="65.0" r="5.4" fill="#7a7a30" opacity="0.66"/><circle cx="52.0" cy="51.2" r="2.8" fill="#666a2d" opacity="0.66"/><circle cx="47.3" cy="62.6" r="4.1" fill="#76772f" opacity="0.66"/><circle cx="44.9" cy="43.2" r="3.5" fill="#5b602c" opacity="0.66"/><circle cx="28.5" cy="58.7" r="5.3" fill="#71732f" opacity="0.66"/><circle cx="36.7" cy="22.0" r="4.2" fill="#3d4828" opacity="0.66"/><circle cx="42.4" cy="37.0" r="5.1" fill="#53592b" opacity="0.66"/><circle cx="50.9" cy="13.0" r="4.8" fill="#313d26" opacity="0.66"/><circle cx="29.7" cy="53.5" r="2.4" fill="#6a6d2e" opacity="0.66"/><circle cx="40.7" cy="37.5" r="2.2" fill="#535a2b" opacity="0.66"/><circle cx="47.9" cy="52.4" r="3.2" fill="#686b2d" opacity="0.66"/><circle cx="45.2" cy="42.1" r="2.5" fill="#5a5f2c" opacity="0.66"/><circle cx="59.9" cy="52.4" r="2.1" fill="#686b2d" opacity="0.66"/><circle cx="62.9" cy="25.0" r="2.5" fill="#424b28" opacity="0.66"/><circle cx="44.7" cy="59.0" r="3.3" fill="#71732f" opacity="0.66"/><circle cx="67.1" cy="62.2" r="5.5" fill="#76772f" opacity="0.66"/><circle cx="23.5" cy="46.4" r="2.3" fill="#60642c" opacity="0.66"/><circle cx="59.3" cy="52.1" r="2.9" fill="#686b2d" opacity="0.66"/><circle cx="50.4" cy="32.6" r="2.1" fill="#4c542a" opacity="0.66"/><circle cx="67.1" cy="35.4" r="2.5" fill="#50572a" opacity="0.66"/><circle cx="41.2" cy="41.0" r="3.8" fill="#585e2b" opacity="0.66"/><circle cx="75.8" cy="38.0" r="4.4" fill="#545a2b" opacity="0.66"/><circle cx="43.7" cy="59.5" r="2.6" fill="#72732f" opacity="0.66"/><circle cx="48.2" cy="20.3" r="4.7" fill="#3b4627" opacity="0.66"/><circle cx="38.4" cy="53.4" r="4.8" fill="#6a6c2e" opacity="0.66"/><circle cx="75.8" cy="39.2" r="4.8" fill="#565c2b" opacity="0.66"/><circle cx="56.8" cy="17.7" r="2.8" fill="#374327" opacity="0.66"/><circle cx="26.8" cy="40.1" r="2.1" fill="#575d2b" opacity="0.66"/><circle cx="60.6" cy="44.6" r="2.9" fill="#5d622c" opacity="0.66"/><circle cx="33.3" cy="12.9" r="3.6" fill="#313d26" opacity="0.66"/><circle cx="76.1" cy="29.7" r="5.3" fill="#485129" opacity="0.66"/><circle cx="35.9" cy="51.7" r="2.8" fill="#676a2d" opacity="0.66"/><circle cx="49.3" cy="53.7" r="4.2" fill="#6a6d2e" opacity="0.66"/><circle cx="69.8" cy="25.1" r="3.7" fill="#424b28" opacity="0.66"/><circle cx="28.0" cy="19.1" r="2.3" fill="#394427" opacity="0.66"/><circle cx="27.9" cy="16.4" r="4.7" fill="#364127" opacity="0.66"/><circle cx="45.0" cy="21.4" r="2.6" fill="#3d4728" opacity="0.66"/><circle cx="49.3" cy="26.0" r="4.8" fill="#434c28" opacity="0.66"/><circle cx="64.2" cy="38.7" r="3.4" fill="#555b2b" opacity="0.66"/><circle cx="71.5" cy="33.3" r="2.6" fill="#4d552a" opacity="0.66"/><circle cx="52.6" cy="49.4" r="5.2" fill="#64682d" opacity="0.66"/><circle cx="48.7" cy="32.5" r="4.9" fill="#4c542a" opacity="0.66"/><circle cx="71.2" cy="38.9" r="3.2" fill="#555b2b" opacity="0.66"/><circle cx="35.4" cy="39.2" r="2.0" fill="#565c2b" opacity="0.66"/><circle cx="70.8" cy="37.5" r="3.8" fill="#535a2b" opacity="0.66"/><circle cx="63.8" cy="34.1" r="5.1" fill="#4e562a" opacity="0.66"/><circle cx="51.2" cy="30.8" r="2.9" fill="#4a5229" opacity="0.66"/><circle cx="41.1" cy="55.1" r="4.1" fill="#6c6e2e" opacity="0.66"/><circle cx="43.8" cy="61.0" r="2.5" fill="#74752f" opacity="0.66"/><circle cx="60.4" cy="32.8" r="3.6" fill="#4d542a" opacity="0.66"/><circle cx="17.3" cy="26.9" r="3.5" fill="#444d29" opacity="0.66"/><circle cx="64.5" cy="31.5" r="3.9" fill="#4b532a" opacity="0.66"/><circle cx="41.9" cy="41.6" r="3.5" fill="#595e2b" opacity="0.66"/><circle cx="45.5" cy="43.1" r="4.8" fill="#5b602c" opacity="0.66"/><circle cx="55.2" cy="60.0" r="4.5" fill="#73742f" opacity="0.66"/><circle cx="28.7" cy="36.3" r="3.8" fill="#52582a" opacity="0.66"/><circle cx="17.4" cy="32.6" r="2.4" fill="#4c542a" opacity="0.66"/><circle cx="31.3" cy="36.9" r="3.0" fill="#52592b" opacity="0.66"/><circle cx="48.2" cy="20.9" r="4.0" fill="#3c4628" opacity="0.66"/><circle cx="47.0" cy="11.8" r="3.6" fill="#2f3c26" opacity="0.66"/><circle cx="27.8" cy="28.2" r="3.8" fill="#464f29" opacity="0.66"/><circle cx="37.6" cy="23.4" r="3.9" fill="#3f4928" opacity="0.66"/><circle cx="12.5" cy="46.2" r="4.4" fill="#5f642c" opacity="0.66"/><circle cx="68.4" cy="20.4" r="2.9" fill="#3b4627" opacity="0.66"/><circle cx="14.4" cy="30.7" r="4.9" fill="#4a5229" opacity="0.66"/><circle cx="51.3" cy="48.9" r="3.5" fill="#63672d" opacity="0.66"/><circle cx="58.0" cy="48.0" r="2.3" fill="#62662d" opacity="0.66"/><circle cx="30.8" cy="17.8" r="5.1" fill="#374327" opacity="0.66"/><circle cx="60.7" cy="63.6" r="4.3" fill="#787830" opacity="0.66"/><circle cx="64.7" cy="65.2" r="5.4" fill="#7a7a30" opacity="0.66"/><circle cx="51.3" cy="72.5" r="3.4" fill="#848331" opacity="0.66"/><circle cx="11.3" cy="44.5" r="4.9" fill="#5d622c" opacity="0.66"/><circle cx="55.8" cy="58.4" r="3.8" fill="#71722f" opacity="0.66"/><circle cx="38.2" cy="52.2" r="3.1" fill="#686b2d" opacity="0.66"/><circle cx="44.4" cy="39.0" r="3.9" fill="#555c2b" opacity="0.66"/><circle cx="42.2" cy="43.1" r="3.2" fill="#5b602c" opacity="0.66"/><circle cx="28.8" cy="27.0" r="2.2" fill="#444d29" opacity="0.66"/><circle cx="74.3" cy="39.4" r="5.4" fill="#565c2b" opacity="0.66"/><circle cx="57.1" cy="50.8" r="2.1" fill="#66692d" opacity="0.66"/><circle cx="47.8" cy="27.6" r="2.5" fill="#454e29" opacity="0.66"/><circle cx="16.6" cy="56.2" r="4.9" fill="#6d702e" opacity="0.66"/><circle cx="44.4" cy="52.2" r="5.2" fill="#686b2d" opacity="0.66"/><circle cx="20.2" cy="30.9" r="2.3" fill="#4a5229" opacity="0.66"/><circle cx="70.4" cy="51.0" r="3.5" fill="#666a2d" opacity="0.66"/><circle cx="74.4" cy="55.5" r="4.2" fill="#6d6f2e" opacity="0.66"/><circle cx="47.4" cy="35.2" r="5.0" fill="#50572a" opacity="0.66"/><circle cx="73.4" cy="53.9" r="3.6" fill="#6a6d2e" opacity="0.66"/><circle cx="32.3" cy="61.0" r="5.2" fill="#74752f" opacity="0.66"/><circle cx="43.9" cy="51.3" r="3.8" fill="#676a2d" opacity="0.66"/><circle cx="45.7" cy="50.5" r="2.6" fill="#65692d" opacity="0.66"/><circle cx="57.4" cy="45.8" r="3.1" fill="#5f632c" opacity="0.66"/><circle cx="35.2" cy="67.5" r="3.0" fill="#7d7d30" opacity="0.66"/><circle cx="32.9" cy="42.0" r="3.2" fill="#595f2b" opacity="0.66"/><circle cx="59.7" cy="43.6" r="2.1" fill="#5c612c" opacity="0.66"/><circle cx="42.5" cy="19.7" r="2.7" fill="#3a4527" opacity="0.66"/><circle cx="12.8" cy="46.9" r="2.4" fill="#60652c" opacity="0.66"/><circle cx="53.6" cy="24.4" r="3.7" fill="#414a28" opacity="0.66"/><circle cx="54.8" cy="26.2" r="3.8" fill="#434d29" opacity="0.66"/><circle cx="32.2" cy="12.7" r="3.2" fill="#303d26" opacity="0.66"/><circle cx="58.6" cy="19.4" r="4.2" fill="#3a4527" opacity="0.66"/><circle cx="30.1" cy="51.6" r="2.2" fill="#676a2d" opacity="0.66"/><circle cx="49.8" cy="46.8" r="4.6" fill="#60652c" opacity="0.66"/><circle cx="44.6" cy="52.8" r="2.3" fill="#696c2e" opacity="0.66"/><circle cx="62.0" cy="17.3" r="4.3" fill="#374227" opacity="0.66"/><path d="M130.5 55 V98" stroke="#9a7030" stroke-width="1.5"/><circle cx="122.5" cy="62.1" r="3.0" fill="#6c6f2e" opacity="0.66"/><circle cx="118.3" cy="56.4" r="3.6" fill="#5d622c" opacity="0.66"/><circle cx="122.5" cy="71.5" r="5.4" fill="#858431" opacity="0.66"/><circle cx="116.6" cy="52.9" r="5.4" fill="#545a2b" opacity="0.66"/><circle cx="120.5" cy="63.5" r="2.0" fill="#70722f" opacity="0.66"/><circle cx="115.5" cy="62.4" r="3.8" fill="#6d6f2e" opacity="0.66"/><circle cx="127.6" cy="65.7" r="2.0" fill="#76772f" opacity="0.66"/><circle cx="123.6" cy="59.0" r="3.4" fill="#64682d" opacity="0.66"/><circle cx="125.8" cy="55.5" r="3.1" fill="#5b602c" opacity="0.66"/><circle cx="125.4" cy="67.3" r="3.9" fill="#7a7a30" opacity="0.66"/><circle cx="124.0" cy="41.8" r="4.5" fill="#374227" opacity="0.66"/><circle cx="131.4" cy="48.3" r="3.1" fill="#485029" opacity="0.66"/><circle cx="129.7" cy="54.5" r="4.5" fill="#585e2b" opacity="0.66"/><circle cx="122.3" cy="53.0" r="4.9" fill="#545b2b" opacity="0.66"/><circle cx="134.6" cy="46.9" r="4.6" fill="#444d29" opacity="0.66"/><circle cx="126.1" cy="50.2" r="3.8" fill="#4d542a" opacity="0.66"/><circle cx="107.9" cy="54.6" r="4.8" fill="#585e2b" opacity="0.66"/><circle cx="130.0" cy="44.1" r="5.1" fill="#3d4728" opacity="0.66"/><circle cx="118.1" cy="42.5" r="2.8" fill="#394427" opacity="0.66"/><circle cx="129.3" cy="56.0" r="3.3" fill="#5c612c" opacity="0.66"/><circle cx="136.8" cy="64.3" r="4.0" fill="#72742f" opacity="0.66"/><circle cx="114.6" cy="45.8" r="4.4" fill="#414b28" opacity="0.66"/><circle cx="123.4" cy="55.0" r="4.8" fill="#5a5f2c" opacity="0.66"/><circle cx="123.9" cy="43.7" r="3.9" fill="#3c4628" opacity="0.66"/><circle cx="122.1" cy="52.2" r="4.6" fill="#52592b" opacity="0.66"/><circle cx="123.9" cy="58.6" r="2.9" fill="#63672d" opacity="0.66"/><circle cx="123.1" cy="48.5" r="4.6" fill="#485129" opacity="0.66"/><circle cx="135.7" cy="53.3" r="3.3" fill="#555b2b" opacity="0.66"/><circle cx="109.8" cy="56.8" r="4.7" fill="#5e632c" opacity="0.66"/><circle cx="113.8" cy="46.3" r="2.3" fill="#424c28" opacity="0.66"/><circle cx="128.8" cy="61.0" r="4.6" fill="#696c2e" opacity="0.66"/><circle cx="119.7" cy="66.4" r="2.0" fill="#787830" opacity="0.66"/><circle cx="131.6" cy="57.9" r="4.4" fill="#61652d" opacity="0.66"/><circle cx="118.9" cy="42.4" r="3.0" fill="#384327" opacity="0.66"/><circle cx="112.7" cy="53.9" r="3.6" fill="#575d2b" opacity="0.66"/><circle cx="136.4" cy="65.8" r="2.7" fill="#76772f" opacity="0.66"/><circle cx="141.1" cy="52.8" r="2.1" fill="#545a2b" opacity="0.66"/><circle cx="108.6" cy="58.8" r="5.4" fill="#64672d" opacity="0.66"/><path d="M172.8 40 V111" stroke="#9a7030" stroke-width="1.5"/><circle cx="166.8" cy="44.7" r="2.7" fill="#60642c" opacity="0.66"/><circle cx="193.2" cy="35.7" r="4.0" fill="#545a2b" opacity="0.66"/><circle cx="195.1" cy="57.4" r="5.3" fill="#71732f" opacity="0.66"/><circle cx="200.7" cy="61.7" r="3.8" fill="#77782f" opacity="0.66"/><circle cx="201.2" cy="22.6" r="2.8" fill="#424b28" opacity="0.66"/><circle cx="198.1" cy="27.2" r="2.1" fill="#485029" opacity="0.66"/><circle cx="202.5" cy="40.5" r="3.6" fill="#5a602c" opacity="0.66"/><circle cx="177.7" cy="49.6" r="3.2" fill="#676a2d" opacity="0.66"/><circle cx="169.0" cy="67.2" r="2.0" fill="#7f7e30" opacity="0.66"/><circle cx="181.1" cy="10.3" r="2.4" fill="#313d26" opacity="0.66"/><circle cx="205.1" cy="28.0" r="5.2" fill="#495129" opacity="0.66"/><circle cx="176.5" cy="57.7" r="3.4" fill="#72732f" opacity="0.66"/><circle cx="205.0" cy="39.8" r="3.3" fill="#595f2b" opacity="0.66"/><circle cx="167.3" cy="46.6" r="2.2" fill="#63672d" opacity="0.66"/><circle cx="204.8" cy="57.7" r="3.0" fill="#72732f" opacity="0.66"/><circle cx="194.2" cy="34.4" r="2.9" fill="#52592a" opacity="0.66"/><circle cx="168.9" cy="39.2" r="3.3" fill="#585e2b" opacity="0.66"/><circle cx="210.5" cy="31.7" r="4.8" fill="#4e562a" opacity="0.66"/><circle cx="159.7" cy="17.1" r="5.3" fill="#3a4527" opacity="0.66"/><circle cx="155.2" cy="31.8" r="2.2" fill="#4e562a" opacity="0.66"/><circle cx="178.7" cy="19.7" r="4.6" fill="#3e4828" opacity="0.66"/><circle cx="171.4" cy="27.7" r="2.2" fill="#495129" opacity="0.66"/><circle cx="189.6" cy="35.7" r="3.7" fill="#545a2b" opacity="0.66"/><circle cx="172.1" cy="53.3" r="4.6" fill="#6c6e2e" opacity="0.66"/><circle cx="195.5" cy="37.8" r="4.3" fill="#575d2b" opacity="0.66"/><circle cx="173.7" cy="62.1" r="3.4" fill="#787830" opacity="0.66"/><circle cx="186.5" cy="49.6" r="2.7" fill="#676a2d" opacity="0.66"/><circle cx="199.0" cy="27.9" r="2.8" fill="#495129" opacity="0.66"/><circle cx="208.4" cy="21.7" r="3.6" fill="#414a28" opacity="0.66"/><circle cx="188.8" cy="49.4" r="2.3" fill="#666a2d" opacity="0.66"/><circle cx="176.7" cy="46.6" r="2.8" fill="#62662d" opacity="0.66"/><circle cx="179.8" cy="63.5" r="5.1" fill="#7a7a30" opacity="0.66"/><circle cx="181.0" cy="20.6" r="3.4" fill="#3f4928" opacity="0.66"/><circle cx="162.8" cy="37.2" r="3.2" fill="#565c2b" opacity="0.66"/><circle cx="195.1" cy="45.8" r="5.4" fill="#61662d" opacity="0.66"/><circle cx="196.4" cy="55.5" r="4.2" fill="#6f712e" opacity="0.66"/><circle cx="189.6" cy="30.0" r="2.9" fill="#4c542a" opacity="0.66"/><circle cx="181.2" cy="59.0" r="3.6" fill="#73752f" opacity="0.66"/><circle cx="209.7" cy="31.5" r="5.1" fill="#4e552a" opacity="0.66"/><circle cx="185.2" cy="40.6" r="4.5" fill="#5a602c" opacity="0.66"/><circle cx="197.7" cy="27.2" r="4.1" fill="#485029" opacity="0.66"/><circle cx="199.8" cy="40.0" r="5.2" fill="#5a5f2c" opacity="0.66"/><circle cx="194.7" cy="13.3" r="5.4" fill="#354127" opacity="0.66"/><circle cx="181.1" cy="48.7" r="2.5" fill="#65692d" opacity="0.66"/><circle cx="155.0" cy="36.3" r="5.3" fill="#545b2b" opacity="0.66"/><circle cx="176.5" cy="15.0" r="4.7" fill="#374327" opacity="0.66"/><circle cx="158.7" cy="46.1" r="2.1" fill="#62662d" opacity="0.66"/><circle cx="183.8" cy="26.5" r="5.2" fill="#475029" opacity="0.66"/><circle cx="171.1" cy="27.2" r="2.4" fill="#485029" opacity="0.66"/><circle cx="180.7" cy="65.2" r="4.4" fill="#7c7c30" opacity="0.66"/><circle cx="186.1" cy="44.3" r="3.8" fill="#5f642c" opacity="0.66"/><circle cx="164.8" cy="30.7" r="2.8" fill="#4d542a" opacity="0.66"/><circle cx="179.3" cy="38.7" r="3.1" fill="#585e2b" opacity="0.66"/><circle cx="149.8" cy="47.9" r="4.3" fill="#64682d" opacity="0.66"/><circle cx="196.7" cy="25.9" r="2.8" fill="#464f29" opacity="0.66"/><circle cx="181.6" cy="72.2" r="4.5" fill="#858431" opacity="0.66"/><circle cx="179.8" cy="43.1" r="3.7" fill="#5e632c" opacity="0.66"/><circle cx="172.0" cy="22.6" r="2.9" fill="#424b28" opacity="0.66"/><circle cx="165.4" cy="12.7" r="2.8" fill="#344027" opacity="0.66"/><circle cx="197.8" cy="43.7" r="3.5" fill="#5e632c" opacity="0.66"/><circle cx="175.9" cy="28.6" r="4.8" fill="#4a5229" opacity="0.66"/><circle cx="179.5" cy="18.2" r="2.7" fill="#3c4628" opacity="0.66"/><circle cx="197.1" cy="36.9" r="4.9" fill="#555b2b" opacity="0.66"/><circle cx="182.6" cy="53.3" r="4.7" fill="#6c6e2e" opacity="0.66"/><circle cx="172.1" cy="70.8" r="3.7" fill="#838231" opacity="0.66"/><circle cx="186.2" cy="52.4" r="3.5" fill="#6a6d2e" opacity="0.66"/><circle cx="164.8" cy="12.4" r="2.5" fill="#344026" opacity="0.66"/><circle cx="170.8" cy="48.1" r="5.4" fill="#65682d" opacity="0.66"/><circle cx="184.5" cy="44.3" r="2.2" fill="#5f642c" opacity="0.66"/><circle cx="156.8" cy="59.2" r="5.1" fill="#74752f" opacity="0.66"/><circle cx="177.4" cy="7.2" r="5.3" fill="#2d3a26" opacity="0.66"/><circle cx="175.3" cy="50.6" r="5.3" fill="#686b2d" opacity="0.66"/><circle cx="180.9" cy="35.8" r="4.3" fill="#545a2b" opacity="0.66"/><circle cx="167.8" cy="52.6" r="3.2" fill="#6b6d2e" opacity="0.66"/><circle cx="181.5" cy="40.9" r="3.0" fill="#5b602c" opacity="0.66"/><circle cx="161.9" cy="65.8" r="2.4" fill="#7d7c30" opacity="0.66"/><circle cx="193.5" cy="37.1" r="3.2" fill="#565c2b" opacity="0.66"/><circle cx="193.7" cy="13.6" r="3.5" fill="#354127" opacity="0.66"/><circle cx="201.1" cy="46.4" r="3.3" fill="#62662d" opacity="0.66"/><circle cx="191.8" cy="34.0" r="3.3" fill="#51582a" opacity="0.66"/><circle cx="184.2" cy="37.6" r="3.4" fill="#565c2b" opacity="0.66"/><circle cx="191.7" cy="14.0" r="2.1" fill="#364127" opacity="0.66"/><circle cx="187.1" cy="41.4" r="5.2" fill="#5b612c" opacity="0.66"/><circle cx="179.8" cy="67.7" r="5.1" fill="#7f7e31" opacity="0.66"/><circle cx="173.0" cy="52.8" r="5.4" fill="#6b6e2e" opacity="0.66"/><circle cx="170.0" cy="30.1" r="4.5" fill="#4c542a" opacity="0.66"/><circle cx="174.8" cy="53.9" r="2.0" fill="#6c6f2e" opacity="0.66"/><circle cx="182.1" cy="8.7" r="4.2" fill="#2f3b26" opacity="0.66"/><circle cx="184.3" cy="38.8" r="2.8" fill="#585e2b" opacity="0.66"/><circle cx="149.3" cy="45.0" r="5.3" fill="#60652c" opacity="0.66"/><circle cx="170.1" cy="49.4" r="3.5" fill="#666a2d" opacity="0.66"/><circle cx="149.5" cy="41.3" r="2.6" fill="#5b602c" opacity="0.66"/><circle cx="189.9" cy="14.0" r="4.9" fill="#364127" opacity="0.66"/><circle cx="184.5" cy="15.8" r="3.1" fill="#384327" opacity="0.66"/><circle cx="173.4" cy="56.2" r="4.7" fill="#70712e" opacity="0.66"/><circle cx="192.0" cy="45.9" r="4.6" fill="#62662d" opacity="0.66"/><circle cx="181.1" cy="46.4" r="2.1" fill="#62662d" opacity="0.66"/><circle cx="165.1" cy="34.5" r="5.4" fill="#52592b" opacity="0.66"/><circle cx="205.4" cy="18.1" r="2.9" fill="#3c4628" opacity="0.66"/><circle cx="188.0" cy="44.1" r="3.7" fill="#5f642c" opacity="0.66"/><circle cx="175.9" cy="20.3" r="2.8" fill="#3f4928" opacity="0.66"/><circle cx="159.5" cy="52.4" r="4.4" fill="#6a6d2e" opacity="0.66"/><circle cx="180.6" cy="10.1" r="4.3" fill="#313d26" opacity="0.66"/><circle cx="202.5" cy="60.5" r="3.0" fill="#75762f" opacity="0.66"/><circle cx="164.3" cy="32.6" r="4.6" fill="#4f572a" opacity="0.66"/><circle cx="185.5" cy="53.6" r="2.9" fill="#6c6e2e" opacity="0.66"/><circle cx="198.5" cy="65.2" r="4.0" fill="#7c7c30" opacity="0.66"/><circle cx="172.3" cy="56.8" r="5.5" fill="#70722f" opacity="0.66"/><circle cx="167.3" cy="39.4" r="4.8" fill="#595e2b" opacity="0.66"/><circle cx="162.3" cy="13.1" r="2.4" fill="#354027" opacity="0.66"/><circle cx="152.1" cy="44.6" r="4.9" fill="#60642c" opacity="0.66"/><circle cx="185.1" cy="37.5" r="3.0" fill="#565c2b" opacity="0.66"/><circle cx="189.9" cy="48.3" r="5.4" fill="#65682d" opacity="0.66"/><circle cx="153.6" cy="24.2" r="3.3" fill="#444d29" opacity="0.66"/><circle cx="194.6" cy="24.8" r="2.9" fill="#454e29" opacity="0.66"/><circle cx="186.5" cy="8.6" r="2.4" fill="#2f3b26" opacity="0.66"/><circle cx="160.6" cy="25.9" r="2.8" fill="#464f29" opacity="0.66"/><circle cx="174.1" cy="47.5" r="2.7" fill="#64682d" opacity="0.66"/><circle cx="180.3" cy="64.3" r="4.3" fill="#7b7b30" opacity="0.66"/><circle cx="181.6" cy="42.2" r="3.1" fill="#5c612c" opacity="0.66"/><circle cx="175.8" cy="29.2" r="3.1" fill="#4b532a" opacity="0.66"/><circle cx="189.3" cy="67.5" r="3.9" fill="#7f7e31" opacity="0.66"/><circle cx="188.7" cy="43.2" r="3.4" fill="#5e632c" opacity="0.66"/><circle cx="157.0" cy="32.2" r="2.3" fill="#4f562a" opacity="0.66"/><circle cx="194.7" cy="62.7" r="3.4" fill="#787930" opacity="0.66"/><circle cx="177.6" cy="55.9" r="5.3" fill="#6f712e" opacity="0.66"/><circle cx="172.0" cy="61.7" r="3.3" fill="#77782f" opacity="0.66"/><circle cx="154.8" cy="55.2" r="5.5" fill="#6e702e" opacity="0.66"/><circle cx="172.8" cy="49.4" r="4.5" fill="#666a2d" opacity="0.66"/><circle cx="181.4" cy="41.4" r="5.2" fill="#5b612c" opacity="0.66"/><circle cx="155.0" cy="53.5" r="3.4" fill="#6c6e2e" opacity="0.66"/><circle cx="196.4" cy="26.1" r="2.6" fill="#474f29" opacity="0.66"/><circle cx="204.0" cy="42.1" r="4.2" fill="#5c612c" opacity="0.66"/><circle cx="187.5" cy="35.8" r="4.2" fill="#545a2b" opacity="0.66"/><circle cx="165.9" cy="55.9" r="2.5" fill="#6f712e" opacity="0.66"/><circle cx="176.4" cy="61.8" r="5.2" fill="#77782f" opacity="0.66"/><path d="M288.5 44 V111" stroke="#9a7030" stroke-width="1.5"/><circle cx="295.7" cy="57.6" r="4.8" fill="#6c6e2e" opacity="0.66"/><circle cx="291.2" cy="41.4" r="2.4" fill="#565c2b" opacity="0.66"/><circle cx="309.5" cy="32.6" r="3.7" fill="#4a5229" opacity="0.66"/><circle cx="308.8" cy="54.4" r="3.4" fill="#686b2d" opacity="0.66"/><circle cx="299.4" cy="30.0" r="4.9" fill="#464f29" opacity="0.66"/><circle cx="294.3" cy="68.1" r="2.8" fill="#7a7a30" opacity="0.66"/><circle cx="254.4" cy="60.9" r="4.9" fill="#70722f" opacity="0.66"/><circle cx="284.4" cy="56.1" r="3.4" fill="#6a6d2e" opacity="0.66"/><circle cx="260.5" cy="41.9" r="2.4" fill="#575d2b" opacity="0.66"/><circle cx="279.5" cy="71.2" r="5.1" fill="#7f7e30" opacity="0.66"/><circle cx="301.6" cy="50.0" r="4.7" fill="#62662d" opacity="0.66"/><circle cx="307.8" cy="51.0" r="2.4" fill="#63672d" opacity="0.66"/><circle cx="260.3" cy="30.5" r="4.2" fill="#475029" opacity="0.66"/><circle cx="272.2" cy="62.4" r="4.0" fill="#73742f" opacity="0.66"/><circle cx="256.1" cy="55.6" r="3.6" fill="#696c2e" opacity="0.66"/><circle cx="275.8" cy="45.3" r="4.2" fill="#5b602c" opacity="0.66"/><circle cx="265.2" cy="44.9" r="4.7" fill="#5b602c" opacity="0.66"/><circle cx="282.9" cy="23.7" r="2.6" fill="#3e4828" opacity="0.66"/><circle cx="270.5" cy="45.4" r="2.4" fill="#5b612c" opacity="0.66"/><circle cx="271.9" cy="47.3" r="3.5" fill="#5e632c" opacity="0.66"/><circle cx="274.2" cy="43.7" r="4.2" fill="#595f2b" opacity="0.66"/><circle cx="302.8" cy="57.5" r="4.7" fill="#6c6e2e" opacity="0.66"/><circle cx="273.3" cy="43.6" r="3.8" fill="#595f2b" opacity="0.66"/><circle cx="256.0" cy="66.2" r="2.5" fill="#787830" opacity="0.66"/><circle cx="299.5" cy="18.2" r="4.6" fill="#364227" opacity="0.66"/><circle cx="283.9" cy="32.7" r="5.4" fill="#4a5229" opacity="0.66"/><circle cx="246.9" cy="45.6" r="5.2" fill="#5c612c" opacity="0.66"/><circle cx="293.5" cy="68.6" r="5.3" fill="#7b7b30" opacity="0.66"/><circle cx="295.1" cy="51.0" r="4.6" fill="#63672d" opacity="0.66"/><circle cx="295.8" cy="70.0" r="3.0" fill="#7d7d30" opacity="0.66"/><circle cx="283.1" cy="34.6" r="3.8" fill="#4d542a" opacity="0.66"/><circle cx="290.3" cy="37.8" r="2.9" fill="#51582a" opacity="0.66"/><circle cx="262.4" cy="43.4" r="2.1" fill="#595e2b" opacity="0.66"/><circle cx="283.6" cy="54.1" r="5.3" fill="#676a2d" opacity="0.66"/><circle cx="265.8" cy="16.1" r="2.6" fill="#333f26" opacity="0.66"/><circle cx="281.0" cy="35.2" r="3.9" fill="#4d552a" opacity="0.66"/><circle cx="267.3" cy="30.5" r="5.1" fill="#475029" opacity="0.66"/><circle cx="256.6" cy="35.9" r="5.1" fill="#4e562a" opacity="0.66"/><circle cx="305.0" cy="64.1" r="4.2" fill="#75762f" opacity="0.66"/><circle cx="256.3" cy="61.8" r="2.9" fill="#72732f" opacity="0.66"/><circle cx="302.7" cy="42.6" r="3.3" fill="#585d2b" opacity="0.66"/><circle cx="280.9" cy="23.9" r="2.6" fill="#3e4828" opacity="0.66"/><circle cx="278.8" cy="38.6" r="4.9" fill="#52592b" opacity="0.66"/><circle cx="278.4" cy="69.2" r="5.4" fill="#7c7c30" opacity="0.66"/><circle cx="256.9" cy="30.7" r="3.1" fill="#475029" opacity="0.66"/><circle cx="283.3" cy="44.0" r="2.5" fill="#5a5f2c" opacity="0.66"/><circle cx="264.1" cy="30.7" r="3.8" fill="#475029" opacity="0.66"/><circle cx="286.8" cy="38.0" r="2.8" fill="#51582a" opacity="0.66"/><circle cx="277.1" cy="41.2" r="2.0" fill="#565c2b" opacity="0.66"/><circle cx="273.7" cy="50.8" r="3.3" fill="#63672d" opacity="0.66"/><circle cx="282.8" cy="67.6" r="4.1" fill="#7a7a30" opacity="0.66"/><circle cx="286.1" cy="67.8" r="3.7" fill="#7a7a30" opacity="0.66"/><circle cx="300.0" cy="67.8" r="2.9" fill="#7a7a30" opacity="0.66"/><circle cx="283.8" cy="50.5" r="4.2" fill="#62662d" opacity="0.66"/><circle cx="298.7" cy="23.4" r="3.4" fill="#3d4828" opacity="0.66"/><circle cx="278.8" cy="46.3" r="4.3" fill="#5d622c" opacity="0.66"/><circle cx="262.7" cy="37.3" r="4.3" fill="#50572a" opacity="0.66"/><circle cx="249.2" cy="55.0" r="4.6" fill="#686b2d" opacity="0.66"/><circle cx="279.3" cy="75.0" r="2.2" fill="#848231" opacity="0.66"/><circle cx="260.2" cy="40.2" r="2.8" fill="#545b2b" opacity="0.66"/><circle cx="305.5" cy="54.2" r="2.0" fill="#676b2d" opacity="0.66"/><circle cx="248.8" cy="34.0" r="2.5" fill="#4c542a" opacity="0.66"/><circle cx="286.6" cy="67.3" r="3.8" fill="#797930" opacity="0.66"/><circle cx="260.6" cy="21.4" r="2.6" fill="#3b4527" opacity="0.66"/><circle cx="273.2" cy="58.9" r="2.2" fill="#6e702e" opacity="0.66"/><circle cx="300.9" cy="25.7" r="4.5" fill="#414a28" opacity="0.66"/><circle cx="308.8" cy="45.2" r="4.6" fill="#5b602c" opacity="0.66"/><circle cx="252.1" cy="50.0" r="3.6" fill="#62662d" opacity="0.66"/><circle cx="280.3" cy="52.5" r="2.8" fill="#65692d" opacity="0.66"/><circle cx="295.6" cy="48.1" r="4.6" fill="#5f642c" opacity="0.66"/><circle cx="268.9" cy="15.9" r="4.5" fill="#333f26" opacity="0.66"/><circle cx="276.7" cy="67.0" r="3.5" fill="#797930" opacity="0.66"/><circle cx="284.3" cy="22.3" r="2.9" fill="#3c4628" opacity="0.66"/><circle cx="258.7" cy="18.9" r="2.8" fill="#374227" opacity="0.66"/><circle cx="281.0" cy="42.2" r="2.9" fill="#575d2b" opacity="0.66"/><circle cx="281.4" cy="71.5" r="5.3" fill="#7f7e31" opacity="0.66"/><circle cx="278.6" cy="27.1" r="5.1" fill="#434c28" opacity="0.66"/><circle cx="272.4" cy="56.3" r="5.2" fill="#6a6d2e" opacity="0.66"/><circle cx="261.0" cy="24.6" r="4.3" fill="#3f4928" opacity="0.66"/><circle cx="299.8" cy="41.2" r="4.9" fill="#565c2b" opacity="0.66"/><circle cx="269.3" cy="15.5" r="3.5" fill="#333f26" opacity="0.66"/><circle cx="275.3" cy="20.7" r="3.1" fill="#3a4527" opacity="0.66"/><circle cx="284.9" cy="68.1" r="2.3" fill="#7a7a30" opacity="0.66"/><circle cx="287.8" cy="38.5" r="2.1" fill="#52592b" opacity="0.66"/><circle cx="303.7" cy="63.6" r="3.2" fill="#74752f" opacity="0.66"/><circle cx="281.5" cy="47.1" r="2.1" fill="#5e622c" opacity="0.66"/><circle cx="270.1" cy="20.5" r="4.4" fill="#394427" opacity="0.66"/><circle cx="278.5" cy="37.6" r="4.1" fill="#51582a" opacity="0.66"/><circle cx="259.9" cy="66.1" r="4.9" fill="#787830" opacity="0.66"/><circle cx="284.0" cy="39.9" r="5.0" fill="#545a2b" opacity="0.66"/><circle cx="306.4" cy="27.7" r="2.4" fill="#434c29" opacity="0.66"/><circle cx="281.4" cy="52.5" r="2.1" fill="#65692d" opacity="0.66"/><circle cx="295.8" cy="20.2" r="4.2" fill="#394427" opacity="0.66"/><circle cx="290.4" cy="21.7" r="3.0" fill="#3b4627" opacity="0.66"/><circle cx="285.6" cy="48.8" r="4.7" fill="#60642c" opacity="0.66"/><circle cx="283.6" cy="60.0" r="3.5" fill="#6f712e" opacity="0.66"/><circle cx="293.5" cy="45.9" r="3.0" fill="#5c612c" opacity="0.66"/><circle cx="275.1" cy="26.3" r="3.1" fill="#414b28" opacity="0.66"/><circle cx="300.3" cy="39.1" r="5.0" fill="#53592b" opacity="0.66"/><circle cx="276.0" cy="41.2" r="3.4" fill="#565c2b" opacity="0.66"/><circle cx="252.9" cy="55.0" r="3.2" fill="#686b2d" opacity="0.66"/><circle cx="272.6" cy="22.2" r="2.8" fill="#3c4628" opacity="0.66"/><circle cx="284.1" cy="38.0" r="4.9" fill="#51582a" opacity="0.66"/><circle cx="279.3" cy="44.5" r="2.7" fill="#5a602c" opacity="0.66"/><circle cx="281.5" cy="11.5" r="2.0" fill="#2d3a26" opacity="0.66"/><circle cx="257.5" cy="45.2" r="4.8" fill="#5b602c" opacity="0.66"/><circle cx="287.7" cy="63.8" r="3.2" fill="#75762f" opacity="0.66"/><circle cx="286.2" cy="31.2" r="5.3" fill="#485029" opacity="0.66"/><circle cx="276.2" cy="56.8" r="4.4" fill="#6b6e2e" opacity="0.66"/><circle cx="270.2" cy="44.1" r="4.2" fill="#5a5f2c" opacity="0.66"/><circle cx="304.0" cy="57.9" r="4.4" fill="#6c6f2e" opacity="0.66"/><circle cx="284.7" cy="19.7" r="3.2" fill="#384327" opacity="0.66"/><circle cx="263.6" cy="55.0" r="5.1" fill="#686b2d" opacity="0.66"/><circle cx="305.3" cy="59.8" r="2.1" fill="#6f712e" opacity="0.66"/><circle cx="283.0" cy="58.3" r="5.2" fill="#6d6f2e" opacity="0.66"/><circle cx="260.6" cy="43.9" r="5.1" fill="#595f2b" opacity="0.66"/><circle cx="281.1" cy="64.6" r="3.9" fill="#76762f" opacity="0.66"/><circle cx="279.8" cy="16.2" r="4.3" fill="#343f26" opacity="0.66"/><circle cx="269.2" cy="57.7" r="2.5" fill="#6c6f2e" opacity="0.66"/><circle cx="293.2" cy="22.5" r="4.6" fill="#3c4728" opacity="0.66"/><circle cx="288.7" cy="61.6" r="4.7" fill="#72732f" opacity="0.66"/><circle cx="270.6" cy="39.5" r="3.6" fill="#535a2b" opacity="0.66"/><circle cx="289.5" cy="34.8" r="2.7" fill="#4d552a" opacity="0.66"/><circle cx="270.5" cy="69.3" r="5.0" fill="#7c7c30" opacity="0.66"/><circle cx="285.1" cy="52.9" r="2.9" fill="#66692d" opacity="0.66"/><circle cx="268.7" cy="63.8" r="2.6" fill="#75762f" opacity="0.66"/><circle cx="273.3" cy="54.7" r="5.4" fill="#686b2d" opacity="0.66"/><circle cx="277.9" cy="35.7" r="5.4" fill="#4e562a" opacity="0.66"/><circle cx="293.9" cy="55.1" r="5.4" fill="#696c2e" opacity="0.66"/><circle cx="286.6" cy="17.7" r="3.5" fill="#364127" opacity="0.66"/><circle cx="287.4" cy="67.8" r="2.4" fill="#7a7a30" opacity="0.66"/><circle cx="284.1" cy="62.0" r="2.1" fill="#72732f" opacity="0.66"/><circle cx="255.9" cy="61.0" r="4.4" fill="#71722f" opacity="0.66"/><circle cx="253.9" cy="43.9" r="3.6" fill="#595f2b" opacity="0.66"/><circle cx="294.3" cy="63.0" r="3.4" fill="#73752f" opacity="0.66"/><circle cx="277.2" cy="12.9" r="3.5" fill="#2f3c26" opacity="0.66"/><path d="M332.6 56 V97" stroke="#9a7030" stroke-width="1.5"/><circle cx="324.7" cy="50.0" r="3.5" fill="#495129" opacity="0.66"/><circle cx="341.1" cy="69.0" r="5.1" fill="#7e7e30" opacity="0.66"/><circle cx="341.3" cy="43.2" r="5.0" fill="#364127" opacity="0.66"/><circle cx="332.8" cy="44.9" r="3.6" fill="#3a4527" opacity="0.66"/><circle cx="333.5" cy="67.2" r="2.3" fill="#797930" opacity="0.66"/><circle cx="324.7" cy="62.7" r="4.5" fill="#6c6f2e" opacity="0.66"/><circle cx="333.3" cy="50.9" r="3.5" fill="#4b532a" opacity="0.66"/><circle cx="325.3" cy="59.3" r="3.4" fill="#63672d" opacity="0.66"/><circle cx="330.8" cy="42.3" r="2.6" fill="#333f26" opacity="0.66"/><circle cx="329.8" cy="44.6" r="3.4" fill="#3a4427" opacity="0.66"/><circle cx="320.3" cy="57.0" r="2.1" fill="#5c612c" opacity="0.66"/><circle cx="332.9" cy="54.6" r="4.7" fill="#555c2b" opacity="0.66"/><circle cx="350.9" cy="52.1" r="2.4" fill="#4e562a" opacity="0.66"/><circle cx="327.3" cy="51.0" r="4.5" fill="#4b532a" opacity="0.66"/><circle cx="324.5" cy="55.1" r="4.9" fill="#575d2b" opacity="0.66"/><circle cx="328.0" cy="54.7" r="5.3" fill="#565c2b" opacity="0.66"/><circle cx="342.8" cy="68.3" r="3.4" fill="#7c7c30" opacity="0.66"/><circle cx="339.4" cy="51.5" r="5.4" fill="#4d542a" opacity="0.66"/><circle cx="336.9" cy="58.3" r="3.0" fill="#60642c" opacity="0.66"/><circle cx="337.9" cy="56.7" r="3.5" fill="#5b612c" opacity="0.66"/><circle cx="325.6" cy="62.2" r="3.2" fill="#6b6d2e" opacity="0.66"/><circle cx="338.3" cy="62.5" r="4.6" fill="#6c6e2e" opacity="0.66"/><circle cx="351.0" cy="52.0" r="2.8" fill="#4e562a" opacity="0.66"/><circle cx="342.4" cy="47.4" r="2.7" fill="#414b28" opacity="0.66"/><circle cx="350.2" cy="66.0" r="4.8" fill="#76762f" opacity="0.66"/><circle cx="331.0" cy="48.4" r="4.0" fill="#444d29" opacity="0.66"/><circle cx="341.8" cy="71.5" r="3.2" fill="#858331" opacity="0.66"/><circle cx="328.2" cy="45.1" r="4.9" fill="#3b4627" opacity="0.66"/><circle cx="330.1" cy="57.5" r="3.9" fill="#5e632c" opacity="0.66"/><circle cx="351.0" cy="66.2" r="3.2" fill="#76772f" opacity="0.66"/><circle cx="344.1" cy="50.2" r="3.3" fill="#495129" opacity="0.66"/><circle cx="338.7" cy="65.6" r="2.7" fill="#74752f" opacity="0.66"/><circle cx="354.6" cy="56.2" r="3.0" fill="#5a602c" opacity="0.66"/><circle cx="339.3" cy="63.8" r="3.7" fill="#6f712e" opacity="0.66"/><circle cx="325.9" cy="61.3" r="4.3" fill="#686b2d" opacity="0.66"/><circle cx="327.2" cy="67.6" r="5.0" fill="#7a7a30" opacity="0.66"/><circle cx="354.9" cy="61.0" r="5.2" fill="#686b2d" opacity="0.66"/><circle cx="340.2" cy="51.2" r="4.9" fill="#4c542a" opacity="0.66"/><path d="M407 38 V111.5" stroke="#9a7030" stroke-width="1.5"/><circle cx="409.4" cy="35.9" r="2.0" fill="#575d2b" opacity="0.66"/><circle cx="433.2" cy="29.9" r="2.9" fill="#4f562a" opacity="0.66"/><circle cx="418.5" cy="44.5" r="2.8" fill="#62662d" opacity="0.66"/><circle cx="413.6" cy="19.7" r="2.5" fill="#424b28" opacity="0.66"/><circle cx="432.5" cy="20.8" r="2.6" fill="#434d29" opacity="0.66"/><circle cx="428.3" cy="21.6" r="4.7" fill="#444d29" opacity="0.66"/><circle cx="397.2" cy="9.5" r="4.8" fill="#354027" opacity="0.66"/><circle cx="417.0" cy="26.8" r="4.4" fill="#4b532a" opacity="0.66"/><circle cx="386.4" cy="32.4" r="3.5" fill="#52592b" opacity="0.66"/><circle cx="426.6" cy="21.5" r="2.9" fill="#444d29" opacity="0.66"/><circle cx="411.9" cy="48.7" r="3.7" fill="#676a2d" opacity="0.66"/><circle cx="428.7" cy="46.0" r="2.5" fill="#64682d" opacity="0.66"/><circle cx="391.3" cy="39.3" r="3.9" fill="#5b602c" opacity="0.66"/><circle cx="412.0" cy="36.7" r="4.9" fill="#585e2b" opacity="0.66"/><circle cx="390.2" cy="43.0" r="4.3" fill="#60642c" opacity="0.66"/><circle cx="420.0" cy="21.6" r="3.5" fill="#444d29" opacity="0.66"/><circle cx="417.2" cy="36.2" r="4.2" fill="#575d2b" opacity="0.66"/><circle cx="408.7" cy="34.9" r="4.1" fill="#555c2b" opacity="0.66"/><circle cx="399.2" cy="7.4" r="3.2" fill="#323e26" opacity="0.66"/><circle cx="430.9" cy="35.3" r="3.7" fill="#565c2b" opacity="0.66"/><circle cx="414.1" cy="35.2" r="4.5" fill="#565c2b" opacity="0.66"/><circle cx="399.9" cy="25.1" r="5.0" fill="#495129" opacity="0.66"/><circle cx="398.2" cy="54.7" r="3.8" fill="#6f712e" opacity="0.66"/><circle cx="412.5" cy="24.4" r="3.5" fill="#485029" opacity="0.66"/><circle cx="392.4" cy="49.5" r="4.9" fill="#686b2d" opacity="0.66"/><circle cx="403.9" cy="68.1" r="3.4" fill="#807f31" opacity="0.66"/><circle cx="397.3" cy="37.6" r="3.8" fill="#595f2b" opacity="0.66"/><circle cx="434.0" cy="33.7" r="4.8" fill="#545a2b" opacity="0.66"/><circle cx="403.7" cy="53.3" r="3.0" fill="#6d6f2e" opacity="0.66"/><circle cx="391.4" cy="24.2" r="4.7" fill="#485029" opacity="0.66"/><circle cx="434.9" cy="45.2" r="5.1" fill="#63672d" opacity="0.66"/><circle cx="406.2" cy="36.4" r="3.1" fill="#575d2b" opacity="0.66"/><circle cx="422.1" cy="38.5" r="5.2" fill="#5a602c" opacity="0.66"/><circle cx="392.9" cy="20.8" r="4.8" fill="#434d29" opacity="0.66"/><circle cx="429.8" cy="24.0" r="4.2" fill="#485029" opacity="0.66"/><circle cx="394.1" cy="17.9" r="4.1" fill="#404928" opacity="0.66"/><circle cx="406.0" cy="25.5" r="4.3" fill="#495229" opacity="0.66"/><circle cx="386.4" cy="45.8" r="2.4" fill="#64672d" opacity="0.66"/><circle cx="412.7" cy="42.4" r="4.7" fill="#5f642c" opacity="0.66"/><circle cx="431.0" cy="24.0" r="3.3" fill="#485029" opacity="0.66"/><circle cx="422.4" cy="10.8" r="4.0" fill="#374227" opacity="0.66"/><circle cx="410.3" cy="55.0" r="3.5" fill="#6f712e" opacity="0.66"/><circle cx="403.5" cy="57.2" r="4.2" fill="#72742f" opacity="0.66"/><circle cx="415.8" cy="35.5" r="4.0" fill="#565c2b" opacity="0.66"/><circle cx="419.1" cy="40.4" r="4.8" fill="#5d622c" opacity="0.66"/><circle cx="385.6" cy="22.8" r="3.6" fill="#464f29" opacity="0.66"/><circle cx="427.9" cy="39.8" r="4.1" fill="#5c612c" opacity="0.66"/><circle cx="438.4" cy="24.8" r="3.7" fill="#495129" opacity="0.66"/><circle cx="404.5" cy="42.7" r="4.3" fill="#5f642c" opacity="0.66"/><circle cx="413.3" cy="49.0" r="2.1" fill="#686b2d" opacity="0.66"/><circle cx="434.9" cy="38.8" r="2.4" fill="#5b602c" opacity="0.66"/><circle cx="417.8" cy="36.3" r="5.0" fill="#575d2b" opacity="0.66"/><circle cx="412.8" cy="40.3" r="4.5" fill="#5c612c" opacity="0.66"/><circle cx="412.2" cy="67.0" r="2.7" fill="#7f7e30" opacity="0.66"/><circle cx="435.5" cy="47.3" r="4.5" fill="#65692d" opacity="0.66"/><circle cx="426.3" cy="15.2" r="2.3" fill="#3c4728" opacity="0.66"/><circle cx="394.1" cy="17.4" r="3.6" fill="#3f4928" opacity="0.66"/><circle cx="423.0" cy="31.7" r="5.4" fill="#51582a" opacity="0.66"/><circle cx="410.6" cy="35.7" r="2.1" fill="#565c2b" opacity="0.66"/><circle cx="395.5" cy="12.8" r="2.3" fill="#394427" opacity="0.66"/><circle cx="401.7" cy="64.9" r="2.6" fill="#7c7c30" opacity="0.66"/><circle cx="423.5" cy="20.6" r="2.2" fill="#434c29" opacity="0.66"/><circle cx="396.5" cy="56.6" r="3.5" fill="#71732f" opacity="0.66"/><circle cx="406.8" cy="28.2" r="4.8" fill="#4d542a" opacity="0.66"/><circle cx="395.9" cy="58.4" r="4.2" fill="#74752f" opacity="0.66"/><circle cx="396.3" cy="47.7" r="4.8" fill="#66692d" opacity="0.66"/><circle cx="435.4" cy="27.7" r="4.0" fill="#4c542a" opacity="0.66"/><circle cx="409.5" cy="44.3" r="5.4" fill="#62662d" opacity="0.66"/><circle cx="403.2" cy="8.1" r="3.2" fill="#333f26" opacity="0.66"/><circle cx="387.7" cy="16.7" r="4.9" fill="#3e4828" opacity="0.66"/><circle cx="399.1" cy="27.7" r="3.5" fill="#4c542a" opacity="0.66"/><circle cx="423.7" cy="25.4" r="4.4" fill="#495229" opacity="0.66"/><circle cx="388.5" cy="18.4" r="4.8" fill="#404a28" opacity="0.66"/><circle cx="410.9" cy="38.7" r="2.9" fill="#5a602c" opacity="0.66"/><circle cx="391.7" cy="49.9" r="4.9" fill="#696c2e" opacity="0.66"/><circle cx="414.4" cy="34.6" r="4.9" fill="#555b2b" opacity="0.66"/><circle cx="421.4" cy="8.3" r="4.0" fill="#333f26" opacity="0.66"/><circle cx="406.9" cy="69.4" r="4.8" fill="#828131" opacity="0.66"/><circle cx="399.7" cy="7.6" r="3.2" fill="#323e26" opacity="0.66"/><circle cx="429.1" cy="50.5" r="4.8" fill="#6a6c2e" opacity="0.66"/><circle cx="418.7" cy="66.0" r="5.3" fill="#7e7d30" opacity="0.66"/><circle cx="413.2" cy="63.8" r="4.4" fill="#7b7b30" opacity="0.66"/><circle cx="399.6" cy="40.9" r="2.9" fill="#5d622c" opacity="0.66"/><circle cx="411.2" cy="7.6" r="3.6" fill="#323e26" opacity="0.66"/><circle cx="433.5" cy="54.1" r="4.7" fill="#6e702e" opacity="0.66"/><circle cx="413.3" cy="63.1" r="5.1" fill="#7a7a30" opacity="0.66"/><circle cx="426.2" cy="22.3" r="3.7" fill="#454e29" opacity="0.66"/><circle cx="401.6" cy="31.1" r="2.7" fill="#51582a" opacity="0.66"/><circle cx="421.2" cy="63.6" r="3.3" fill="#7a7a30" opacity="0.66"/><circle cx="395.0" cy="30.0" r="3.8" fill="#4f562a" opacity="0.66"/><circle cx="413.8" cy="42.4" r="5.5" fill="#5f642c" opacity="0.66"/><circle cx="405.5" cy="44.5" r="4.2" fill="#62662d" opacity="0.66"/><circle cx="413.3" cy="26.8" r="4.1" fill="#4b532a" opacity="0.66"/><circle cx="399.6" cy="57.5" r="2.1" fill="#73742f" opacity="0.66"/><circle cx="440.2" cy="45.3" r="5.0" fill="#63672d" opacity="0.66"/><circle cx="389.7" cy="40.1" r="2.9" fill="#5c612c" opacity="0.66"/><circle cx="414.3" cy="17.4" r="5.3" fill="#3f4928" opacity="0.66"/><circle cx="413.9" cy="7.1" r="5.4" fill="#323e26" opacity="0.66"/><circle cx="410.9" cy="42.9" r="2.7" fill="#60642c" opacity="0.66"/><circle cx="413.9" cy="45.2" r="2.2" fill="#63672d" opacity="0.66"/><circle cx="385.2" cy="26.6" r="3.6" fill="#4b532a" opacity="0.66"/><circle cx="437.8" cy="27.2" r="2.2" fill="#4c532a" opacity="0.66"/><circle cx="396.9" cy="26.4" r="2.4" fill="#4b532a" opacity="0.66"/><circle cx="423.8" cy="34.1" r="4.0" fill="#545b2b" opacity="0.66"/><circle cx="392.5" cy="11.7" r="4.3" fill="#384327" opacity="0.66"/><circle cx="396.5" cy="51.5" r="2.6" fill="#6b6d2e" opacity="0.66"/><circle cx="440.2" cy="30.6" r="2.8" fill="#50572a" opacity="0.66"/><circle cx="423.9" cy="41.7" r="3.2" fill="#5e632c" opacity="0.66"/><circle cx="434.1" cy="19.1" r="4.9" fill="#414b28" opacity="0.66"/><circle cx="435.8" cy="46.8" r="4.5" fill="#65682d" opacity="0.66"/><circle cx="393.0" cy="10.4" r="2.2" fill="#364127" opacity="0.66"/><circle cx="426.6" cy="61.3" r="5.3" fill="#787830" opacity="0.66"/><circle cx="404.6" cy="22.8" r="4.1" fill="#464f29" opacity="0.66"/><circle cx="411.4" cy="28.9" r="3.1" fill="#4e552a" opacity="0.66"/><circle cx="410.6" cy="48.0" r="3.7" fill="#666a2d" opacity="0.66"/><circle cx="417.2" cy="50.9" r="2.5" fill="#6a6d2e" opacity="0.66"/><circle cx="410.0" cy="35.7" r="4.5" fill="#575d2b" opacity="0.66"/><circle cx="412.4" cy="42.5" r="5.2" fill="#5f642c" opacity="0.66"/><circle cx="416.3" cy="71.0" r="5.0" fill="#848231" opacity="0.66"/><circle cx="418.0" cy="31.1" r="3.6" fill="#51582a" opacity="0.66"/><circle cx="434.5" cy="57.2" r="4.9" fill="#72742f" opacity="0.66"/><circle cx="398.1" cy="22.3" r="3.2" fill="#454e29" opacity="0.66"/><circle cx="419.5" cy="17.9" r="4.2" fill="#404928" opacity="0.66"/><circle cx="418.6" cy="49.1" r="2.2" fill="#686b2d" opacity="0.66"/><circle cx="406.2" cy="14.1" r="2.5" fill="#3b4527" opacity="0.66"/><circle cx="420.3" cy="26.5" r="3.4" fill="#4b532a" opacity="0.66"/><circle cx="418.7" cy="51.3" r="4.9" fill="#6b6d2e" opacity="0.66"/><circle cx="405.8" cy="48.3" r="3.7" fill="#676a2d" opacity="0.66"/><circle cx="399.3" cy="68.0" r="2.4" fill="#807f31" opacity="0.66"/><circle cx="416.3" cy="37.2" r="5.1" fill="#585e2b" opacity="0.66"/><circle cx="405.2" cy="26.0" r="3.7" fill="#4a5229" opacity="0.66"/><path d="M91 58 V100" stroke="#9a7030" stroke-width="1.5"/><circle cx="95.7" cy="64.0" r="2.7" fill="#6d6f2e" opacity="0.66"/><circle cx="88.5" cy="68.5" r="5.5" fill="#7b7b30" opacity="0.66"/><circle cx="99.9" cy="56.4" r="3.0" fill="#545b2b" opacity="0.66"/><circle cx="98.9" cy="56.5" r="4.5" fill="#555b2b" opacity="0.66"/><circle cx="93.5" cy="71.3" r="2.1" fill="#848331" opacity="0.66"/><circle cx="99.4" cy="51.1" r="2.5" fill="#434d29" opacity="0.66"/><circle cx="108.6" cy="58.2" r="3.8" fill="#5a5f2c" opacity="0.66"/><circle cx="100.1" cy="65.8" r="5.2" fill="#73742f" opacity="0.66"/><circle cx="98.8" cy="67.8" r="2.5" fill="#797930" opacity="0.66"/><circle cx="101.7" cy="68.8" r="4.5" fill="#7c7c30" opacity="0.66"/><circle cx="97.9" cy="60.9" r="2.3" fill="#63672d" opacity="0.66"/><circle cx="90.4" cy="52.2" r="3.0" fill="#474f29" opacity="0.66"/><circle cx="99.6" cy="68.0" r="4.5" fill="#7a7a30" opacity="0.66"/><circle cx="100.5" cy="48.6" r="2.7" fill="#3b4627" opacity="0.66"/><circle cx="106.9" cy="62.7" r="3.4" fill="#686b2d" opacity="0.66"/><circle cx="96.6" cy="55.6" r="4.8" fill="#52582a" opacity="0.66"/><circle cx="91.0" cy="68.9" r="5.0" fill="#7c7c30" opacity="0.66"/><circle cx="95.9" cy="58.1" r="5.2" fill="#5a5f2c" opacity="0.66"/><circle cx="85.2" cy="59.9" r="2.9" fill="#60642c" opacity="0.66"/><circle cx="101.6" cy="69.5" r="3.3" fill="#7f7e30" opacity="0.66"/><circle cx="100.7" cy="64.6" r="4.1" fill="#6f712e" opacity="0.66"/><circle cx="105.8" cy="58.3" r="3.6" fill="#5a602c" opacity="0.66"/><path d="M260 60 V98" stroke="#9a7030" stroke-width="1.5"/><circle cx="258.4" cy="59.6" r="4.5" fill="#585e2b" opacity="0.66"/><circle cx="266.8" cy="49.1" r="3.1" fill="#344026" opacity="0.66"/><circle cx="260.2" cy="52.9" r="4.6" fill="#414b28" opacity="0.66"/><circle cx="273.1" cy="64.5" r="5.3" fill="#696c2e" opacity="0.66"/><circle cx="253.3" cy="60.3" r="3.9" fill="#5a602c" opacity="0.66"/><circle cx="260.8" cy="59.7" r="5.4" fill="#585e2b" opacity="0.66"/><circle cx="262.8" cy="64.6" r="2.4" fill="#696c2e" opacity="0.66"/><circle cx="262.0" cy="71.5" r="2.1" fill="#818031" opacity="0.66"/><circle cx="270.6" cy="66.0" r="2.7" fill="#6e702e" opacity="0.66"/><circle cx="271.5" cy="61.1" r="4.0" fill="#5d622c" opacity="0.66"/><circle cx="251.6" cy="58.5" r="2.4" fill="#545b2b" opacity="0.66"/><circle cx="269.3" cy="52.2" r="2.2" fill="#3f4928" opacity="0.66"/><circle cx="268.1" cy="65.9" r="3.8" fill="#6e702e" opacity="0.66"/><circle cx="261.3" cy="63.6" r="3.4" fill="#66692d" opacity="0.66"/><circle cx="268.2" cy="67.2" r="5.0" fill="#72742f" opacity="0.66"/><circle cx="267.6" cy="67.4" r="4.6" fill="#73742f" opacity="0.66"/><circle cx="267.9" cy="70.0" r="5.3" fill="#7c7c30" opacity="0.66"/><circle cx="256.1" cy="65.0" r="4.9" fill="#6b6d2e" opacity="0.66"/><circle cx="254.6" cy="58.8" r="5.3" fill="#555c2b" opacity="0.66"/><circle cx="263.1" cy="53.3" r="2.8" fill="#424c28" opacity="0.66"/><circle cx="258.0" cy="66.8" r="5.4" fill="#71732f" opacity="0.66"/><path d="M22 60 V94" stroke="#9a7030" stroke-width="1.5"/><circle cx="24.4" cy="47.5" r="4.9" fill="#313e26" opacity="0.66"/><circle cx="21.4" cy="58.0" r="3.8" fill="#535a2b" opacity="0.66"/><circle cx="33.0" cy="56.5" r="2.9" fill="#4e562a" opacity="0.66"/><circle cx="10.6" cy="65.0" r="3.3" fill="#6a6c2e" opacity="0.66"/><circle cx="17.2" cy="59.5" r="3.5" fill="#585e2b" opacity="0.66"/><circle cx="18.6" cy="60.0" r="2.5" fill="#595f2b" opacity="0.66"/><circle cx="31.8" cy="57.7" r="5.3" fill="#52592b" opacity="0.66"/><circle cx="11.7" cy="50.8" r="5.1" fill="#3c4628" opacity="0.66"/><circle cx="21.4" cy="58.8" r="4.2" fill="#565c2b" opacity="0.66"/><circle cx="18.9" cy="71.0" r="3.0" fill="#7d7d30" opacity="0.66"/><circle cx="7.1" cy="56.5" r="4.2" fill="#4e562a" opacity="0.66"/><circle cx="20.0" cy="69.5" r="3.5" fill="#787830" opacity="0.66"/><circle cx="26.3" cy="58.0" r="3.1" fill="#535a2b" opacity="0.66"/><circle cx="17.6" cy="56.9" r="4.1" fill="#4f572a" opacity="0.66"/><circle cx="29.0" cy="57.4" r="2.9" fill="#51582a" opacity="0.66"/><circle cx="10.6" cy="62.0" r="2.5" fill="#60642c" opacity="0.66"/><circle cx="22.9" cy="62.9" r="3.0" fill="#63672d" opacity="0.66"/><circle cx="14.5" cy="63.7" r="2.9" fill="#65692d" opacity="0.66"/><circle cx="28.3" cy="65.1" r="4.9" fill="#6a6d2e" opacity="0.66"/><circle cx="12.3" cy="53.6" r="4.3" fill="#454e29" opacity="0.66"/><circle cx="23.4" cy="70.9" r="3.6" fill="#7c7c30" opacity="0.66"/><circle cx="10.0" cy="56.9" r="3.6" fill="#50572a" opacity="0.66"/><circle cx="17.8" cy="65.6" r="2.8" fill="#6b6e2e" opacity="0.66"/><circle cx="12.2" cy="59.4" r="4.0" fill="#585d2b" opacity="0.66"/><ellipse cx="19" cy="94" rx="2.2" ry="1.4" fill="#fff6d8"/><ellipse cx="55" cy="118" rx="2.2" ry="1.4" fill="#fff6d8"/><ellipse cx="67" cy="93" rx="2.2" ry="1.4" fill="#fff6d8"/><ellipse cx="115" cy="93" rx="2.2" ry="1.4" fill="#fff6d8"/><ellipse cx="133" cy="103" rx="2.2" ry="1.4" fill="#fff6d8"/><ellipse cx="177" cy="118" rx="2.2" ry="1.4" fill="#fff6d8"/><ellipse cx="203" cy="101" rx="2.2" ry="1.4" fill="#fff6d8"/><ellipse cx="267" cy="118" rx="2.2" ry="1.4" fill="#fff6d8"/><ellipse cx="371" cy="120" rx="2.2" ry="1.4" fill="#fff6d8"/><ellipse cx="254" cy="97" rx="2.2" ry="1.4" fill="#fff6d8"/></svg>
<span style="left:577.8px;top:457.17px;font-size:48.5px;line-height:48.5px;color:#000;transform:scaleX(0.99);">Spatial coordination of the plant</span>
<span style="left:764.4px;top:518.48px;font-size:48.5px;line-height:48.5px;color:#000;transform:scaleX(0.96);">circadian clock</span>
<span style="left:822px;top:632.12px;font-size:33.5px;line-height:33.5px;color:#000;transform:scaleX(0.95);">James Locke</span>
<span style="left:755.4px;top:687.32px;font-size:33.5px;line-height:33.5px;color:#000;transform:scaleX(1.01);">Sainsbury Laboratory</span>
<span style="left:734.6px;top:740.52px;font-size:33.5px;line-height:33.5px;color:#000;transform:scaleX(1.02);">University of Cambridge</span>
<div style="left:1399px;top:234px;width:16px;height:594px;background:#dcdbdd"></div>
<div style="left:1400.5px;top:235.7px;width:14px;height:14px;background:#fff;box-sizing:border-box;border:1px solid #d0cfd2"></div>
<svg style="left:1403px;top:239px;" width="9" height="6" viewBox="0 0 9 6"><path d="M0.5 5.5 L4.5 1 L8.5 5.5 Z" fill="#666"/></svg>
<div style="left:1400.5px;top:249.5px;width:14px;height:16px;background:#fff;box-sizing:border-box;border:1px solid #d0cfd2"></div>
<div style="left:1400.5px;top:828.7px;width:14px;height:13.5px;background:#fff;box-sizing:border-box;border:1px solid #d0cfd2"></div>
<svg style="left:1403px;top:832.5px;" width="9" height="6" viewBox="0 0 9 6"><path d="M0.5 0.5 L4.5 5 L8.5 0.5 Z" fill="#666"/></svg>
<svg style="left:1402.5px;top:846px;" width="10" height="24" viewBox="0 0 10 24"><path d="M1 5 L5 1 L9 5 Z M1 9 L5 5 L9 9 Z" fill="#777"/><path d="M1 15 L5 19 L9 15 Z M1 19 L5 23 L9 19 Z" fill="#777"/></svg>
<div style="left:424px;top:888px;width:991px;height:1.5px;background:#d8d7da"></div>
<span style="left:433px;top:896.88px;font-size:12.5px;line-height:12.5px;color:#555;transform:scaleX(1.02);">Click to add notes</span>
<span style="left:117.5px;top:950.65px;font-size:9px;line-height:9px;color:#555;transform:scaleX(0.98);">Slide 1 of 75</span>
<svg style="left:182.5px;top:948px;" width="14" height="13" viewBox="0 0 14 13"><g fill="none" stroke="#666" stroke-width="1"><path d="M6 11.5 H0.5 V0.5 H12 V5"/><path d="M5.5 0.5 V11.5"/><path d="M8 7.5 L12.5 12 M12.5 7.5 L8 12"/></g></svg>
<span style="left:210.8px;top:950.65px;font-size:9px;line-height:9px;color:#555;transform:scaleX(1);">English (United Kingdom)</span>
<svg style="left:1045.5px;top:947px;" width="15" height="15" viewBox="0 0 15 15"><path d="M3.5 3.5 L7 1 L10.5 3.5" fill="none" stroke="#555" stroke-width="1"/><path d="M0.5 6.5 H13.5 M0.5 9.5 H13.5 M0.5 12.5 H13.5" stroke="#555" stroke-width="1"/></svg>
<span style="left:1061.5px;top:950.22px;font-size:9.5px;line-height:9.5px;color:#444;transform:scaleX(0.94);">Notes</span>
<div style="left:1101px;top:944.8px;width:34.6px;height:18px;background:#c8c6c4"></div>
<svg style="left:1111.5px;top:947.5px;" width="14" height="13" viewBox="0 0 14 13"><rect x="0.5" y="0.5" width="12.5" height="11.5" fill="none" stroke="#444" stroke-width="1"/><path d="M3 0.5 V9.5 H13" fill="none" stroke="#444" stroke-width="1"/><rect x="6" y="3.5" width="3" height="2.5" fill="#444"/></svg>
<svg style="left:1146.5px;top:947.5px;" width="14" height="13" viewBox="0 0 14 13"><g fill="none" stroke="#555" stroke-width="1"><rect x="0.5" y="0.5" width="5" height="5"/><rect x="8" y="0.5" width="5" height="5"/><rect x="0.5" y="7" width="5" height="5"/><rect x="8" y="7" width="5" height="5"/></g></svg>
<svg style="left:1181.5px;top:947px;" width="13" height="14" viewBox="0 0 13 14"><g fill="none" stroke="#555" stroke-width="1"><path d="M0.5 1 H12 V12 H0.5 Z"/><path d="M6.25 1 V13"/><path d="M2 4 H4.5 M2 6.5 H4.5 M2 9 H4.5 M8 4 H10.5 M8 6.5 H10.5 M8 9 H10.5"/></g></svg>
<svg style="left:1216.5px;top:947px;" width="13" height="14" viewBox="0 0 13 14"><g fill="none" stroke="#555" stroke-width="1"><path d="M0.5 1 H12"/><rect x="1.5" y="1" width="9.5" height="6"/><path d="M6.25 7 V12.5 M3.5 12.5 H9"/></g></svg>
<div style="left:1245px;top:954px;width:7px;height:1px;background:#777"></div>
<div style="left:1257.5px;top:953.8px;width:85.3px;height:1px;background:#999"></div>
<div style="left:1298.5px;top:949px;width:4px;height:10px;background:#666"></div>
<div style="left:1348px;top:954px;width:7.5px;height:1px;background:#777"></div>
<div style="left:1351.25px;top:950.5px;width:1px;height:7.5px;background:#777"></div>
<span style="left:1366.3px;top:950.65px;font-size:9px;line-height:9px;color:#555;transform:scaleX(0.92);">102%</span>
<svg style="left:1397.5px;top:947px;" width="15" height="15" viewBox="0 0 15 15"><g fill="none" stroke="#555" stroke-width="1"><rect x="3.5" y="4.5" width="8" height="6" rx="1"/><path d="M0.5 7.5 L3.5 5 V10 Z M14.5 7.5 L11.5 5 V10 Z"/><path d="M5.5 2.5 L7.5 0.5 L9.5 2.5 M5.5 12.5 L7.5 14.5 L9.5 12.5"/></g></svg>
<svg style="left:1627px;top:173px;" width="200" height="112" viewBox="0 0 200 112"><defs><linearGradient id="jw" x1="0" y1="0" x2="1" y2="0.3"><stop offset="0" stop-color="#c8c4ba"/><stop offset="0.3" stop-color="#d8d4c8"/><stop offset="1" stop-color="#dddccd"/></linearGradient><linearGradient id="jd" x1="0" y1="0" x2="0.3" y2="1"><stop offset="0" stop-color="#d2ac6c"/><stop offset="0.5" stop-color="#c89e5c"/><stop offset="1" stop-color="#c49650"/></linearGradient><radialGradient id="jh" cx="0.5" cy="0.4" r="0.6"><stop offset="0" stop-color="#dcc49a"/><stop offset="0.7" stop-color="#c8aa78"/><stop offset="1" stop-color="#b89868"/></radialGradient><radialGradient id="jf" cx="0.5" cy="0.45" r="0.6"><stop offset="0" stop-color="#e2bcaa"/><stop offset="1" stop-color="#cc9c88"/></radialGradient></defs><rect width="200" height="112" fill="url(#jw)"/><path d="M52 0 H59 L42 88 L36 112 H30 L35 88 Z" fill="#ebe8e0"/><path d="M59 0 H130 L143 88 L146 112 H36 L42 88 Z" fill="url(#jd)"/><path d="M130 0 H137 L152 90 L156 112 H146 L143 88 Z" fill="#ece9e0"/><rect x="156.6" y="66" width="19.4" height="13.4" rx="1.5" fill="#eeede8" stroke="#c4c2ba" stroke-width="0.7"/><path d="M162 72.5 H165 M168 72.5 H171" stroke="#b8b6ae" stroke-width="1.2"/><path d="M59 49 C64 42 70 38 75 37" stroke="#6a4a28" stroke-width="0.8" fill="none"/><path d="M63 48 L67 42 L70 47" stroke="#6a4a28" stroke-width="0.7" fill="none"/><path d="M77 62 C74 36 84 14 106 12 C128 12 142 30 143 56 C144 72 138 84 130 90 L86 90 C80 82 78 72 77 62 Z" fill="url(#jh)"/><path d="M83 46 C83 34 92 27 106 28 C121 28 130 36 130 50 C130 70 124 94 106 98 C90 96 83 70 83 46 Z" fill="url(#jf)"/><path d="M83 40 C86 30 96 24 106 24 C96 30 90 36 86 50 Z" fill="#c8aa78"/><rect x="86" y="51" width="19" height="10.5" rx="1.5" fill="#c4b0b0" stroke="#3c3434" stroke-width="1.3"/><rect x="110" y="52" width="21" height="10.5" rx="1.5" fill="#c4b0b0" stroke="#3c3434" stroke-width="1.3"/><path d="M105 56 H110" stroke="#3c3434" stroke-width="1"/><path d="M104 64 L102 70 H107" stroke="#b88878" stroke-width="0.9" fill="none"/><path d="M90 72 C96 69 116 69 122 72 C123 86 114 98 106 98 C97 98 89 86 90 72 Z" fill="#b0644a"/><path d="M99 77 C103 75 110 75 114 77 C110 80 103 80 99 77 Z" fill="#c89088"/><path d="M98 95 H118 V112 H98 Z" fill="#d8c4bc"/><path d="M32 112 C50 96 66 90 78 86 L86 90 L100 112 Z" fill="#1a2038"/><path d="M116 112 L128 86 C150 90 160 98 168 112 Z" fill="#1a2038"/><path d="M78 82 L88 86 L100 112 H90 L78 92 Z" fill="#141a30"/></svg>
<div style="left:1628px;top:260.6px;width:96px;height:24.4px;background:rgba(40,40,40,0.62)"></div>
<span style="left:1632.4px;top:266.25px;font-size:15px;line-height:15px;color:#fff;transform:scaleX(0.98);">James Locke</span>
<div style="left:1627px;top:293px;width:200px;height:112px;background:#232323"></div>
<span style="left:1706px;top:341.3px;font-size:20px;line-height:20px;color:#fff;font-weight:700;transform:scaleX(1.09);">ting</span>
<div style="left:1627.5px;top:380.6px;width:59.5px;height:23.6px;background:#2c2c2c"></div>
<svg style="left:1631.5px;top:384.5px;" width="18" height="18" viewBox="0 0 18 18"><g fill="#f05a5a"><path d="M5 4 C5 1.5 6.5 0.5 8.5 0.5 C10.5 0.5 12 1.5 12 4 V11 C12 13 10.5 14 8.5 14 C6.5 14 5 13 5 11 Z"/><rect x="7.5" y="13" width="2" height="2"/><rect x="5" y="14.5" width="7" height="2.5"/></g><path d="M0.8 17 L17 0.8" stroke="#2c2c2c" stroke-width="3.2"/><path d="M0.8 17 L17 0.8" stroke="#f05a5a" stroke-width="1.5"/></svg>
<span style="left:1655px;top:386.25px;font-size:15px;line-height:15px;color:#fff;transform:scaleX(1.11);">ting</span>
<div style="left:1627px;top:413px;width:200px;height:112px;background:#232323"></div>
<span style="left:1640.4px;top:459.07px;font-size:20.5px;line-height:20.5px;color:#fff;font-weight:700;transform:scaleX(1.07);">HUAWEI nova 3e</span>
<div style="left:1627px;top:500.4px;width:127px;height:24px;background:#2c2c2c"></div>
<span style="left:1632.8px;top:505.85px;font-size:15px;line-height:15px;color:#fff;transform:scaleX(0.99);">HUAWEI nova 3e</span>
<div style="left:1627px;top:533px;width:200px;height:112px;background:#232323"></div>
<span style="left:1662.6px;top:579.38px;font-size:20.5px;line-height:20.5px;color:#fff;font-weight:700;transform:scaleX(1.07);">Tongkun Liu</span>
<div style="left:1627px;top:620.3px;width:116.8px;height:24px;background:#2c2c2c"></div>
<svg style="left:1631.5px;top:624.5px;" width="18" height="18" viewBox="0 0 18 18"><g fill="#f05a5a"><path d="M5 4 C5 1.5 6.5 0.5 8.5 0.5 C10.5 0.5 12 1.5 12 4 V11 C12 13 10.5 14 8.5 14 C6.5 14 5 13 5 11 Z"/><rect x="7.5" y="13" width="2" height="2"/><rect x="5" y="14.5" width="7" height="2.5"/></g><path d="M0.8 17 L17 0.8" stroke="#2c2c2c" stroke-width="3.2"/><path d="M0.8 17 L17 0.8" stroke="#f05a5a" stroke-width="1.5"/></svg>
<span style="left:1655px;top:625.85px;font-size:15px;line-height:15px;color:#fff;transform:scaleX(1.03);">Tongkun Liu</span>
<div style="left:1627px;top:653px;width:200px;height:112px;background:#232323"></div>
<span style="left:1634px;top:698.58px;font-size:20.5px;line-height:20.5px;color:#fff;font-weight:700;transform:scaleX(1.06);">Takato  Imaizum...</span>
<div style="left:1627.2px;top:740.5px;width:199.8px;height:23.5px;background:#2c2c2c"></div>
<svg style="left:1631.5px;top:744px;" width="18" height="18" viewBox="0 0 18 18"><g fill="#f05a5a"><path d="M5 4 C5 1.5 6.5 0.5 8.5 0.5 C10.5 0.5 12 1.5 12 4 V11 C12 13 10.5 14 8.5 14 C6.5 14 5 13 5 11 Z"/><rect x="7.5" y="13" width="2" height="2"/><rect x="5" y="14.5" width="7" height="2.5"/></g><path d="M0.8 17 L17 0.8" stroke="#2c2c2c" stroke-width="3.2"/><path d="M0.8 17 L17 0.8" stroke="#f05a5a" stroke-width="1.5"/></svg>
<span style="left:1655.8px;top:745.75px;font-size:15px;line-height:15px;color:#fff;transform:scaleX(1.02);">Takato Imaizumi He,Him</span>
<div style="left:1621.8px;top:768.2px;width:210px;height:121.6px;background:linear-gradient(#d4ea72,#b6e050 25%,#66c800 50%,#9ad83a 70%,#eef58e)"></div>
<svg style="left:1627px;top:773px;" width="200" height="112" viewBox="0 0 200 112"><defs><linearGradient id="zw" x1="0" y1="0" x2="0" y2="1"><stop offset="0" stop-color="#bdbdc2"/><stop offset="0.3" stop-color="#c9c9cd"/><stop offset="1" stop-color="#c4c4c8"/></linearGradient><clipPath id="swc"><path d="M56 112 C58 90 66 78 84 72 C92 69 100 66 104 64 L140 70 C160 72 176 84 186 112 Z"/></clipPath></defs><rect width="200" height="112" fill="url(#zw)"/><path d="M9.6 0 H53 L56 18.5 H22 Z" fill="#f4f4f6"/><path d="M168 13.6 H200 V29 H155.7 Z" fill="#ececee"/><rect x="0" y="35" width="200" height="1.2" fill="#a8a8ac"/><rect x="0" y="36" width="200" height="24" fill="#d2d2d6"/><rect x="56" y="38" width="1" height="24" fill="#9a9a9e"/><rect x="0" y="55" width="9" height="4" fill="#c05060"/><rect x="40" y="58" width="12" height="3" fill="#d04060"/><rect x="54" y="56" width="16" height="6" fill="#e8e8e8"/><rect x="0" y="59" width="98" height="4.5" fill="#2a3560"/><rect x="0" y="63.5" width="98" height="48.5" fill="#c2c2c6"/><rect x="0" y="90" width="60" height="22" fill="#a6a6aa"/><rect x="26" y="86" width="20" height="10" fill="#8a8580"/><rect x="150" y="29" width="50" height="83" fill="#d8d8dc"/><path d="M149 47 L160 45 L168 81 L150 84 Z" fill="#3a3a40"/><path d="M56 112 C58 90 66 78 84 72 C92 69 100 66 104 64 L140 70 C160 72 176 84 186 112 Z" fill="#2a2b30"/><g clip-path="url(#swc)"><path d="M56.0 70.0 l1.7 -1.7 l1.7 1.7 l-1.7 1.7 Z" fill="#e4e4e4"/><path d="M59.8 70.0 l1.7 -1.7 l1.7 1.7 l-1.7 1.7 Z" fill="#e4e4e4"/><path d="M63.6 70.0 l1.7 -1.7 l1.7 1.7 l-1.7 1.7 Z" fill="#e4e4e4"/><path d="M67.4 70.0 l1.7 -1.7 l1.7 1.7 l-1.7 1.7 Z" fill="#e4e4e4"/><path d="M71.2 70.0 l1.7 -1.7 l1.7 1.7 l-1.7 1.7 Z" fill="#e4e4e4"/><path d="M75.0 70.0 l1.7 -1.7 l1.7 1.7 l-1.7 1.7 Z" fill="#e4e4e4"/><path d="M78.8 70.0 l1.7 -1.7 l1.7 1.7 l-1.7 1.7 Z" fill="#e4e4e4"/><path d="M82.6 70.0 l1.7 -1.7 l1.7 1.7 l-1.7 1.7 Z" fill="#e4e4e4"/><path d="M86.4 70.0 l1.7 -1.7 l1.7 1.7 l-1.7 1.7 Z" fill="#e4e4e4"/><path d="M90.2 70.0 l1.7 -1.7 l1.7 1.7 l-1.7 1.7 Z" fill="#e4e4e4"/><path d="M94.0 70.0 l1.7 -1.7 l1.7 1.7 l-1.7 1.7 Z" fill="#e4e4e4"/><path d="M97.8 70.0 l1.7 -1.7 l1.7 1.7 l-1.7 1.7 Z" fill="#e4e4e4"/><path d="M101.6 70.0 l1.7 -1.7 l1.7 1.7 l-1.7 1.7 Z" fill="#e4e4e4"/><path d="M105.4 70.0 l1.7 -1.7 l1.7 1.7 l-1.7 1.7 Z" fill="#e4e4e4"/><path d="M109.2 70.0 l1.7 -1.7 l1.7 1.7 l-1.7 1.7 Z" fill="#e4e4e4"/><path d="M113.0 70.0 l1.7 -1.7 l1.7 1.7 l-1.7 1.7 Z" fill="#e4e4e4"/><path d="M116.8 70.0 l1.7 -1.7 l1.7 1.7 l-1.7 1.7 Z" fill="#e4e4e4"/><path d="M120.6 70.0 l1.7 -1.7 l1.7 1.7 l-1.7 1.7 Z" fill="#e4e4e4"/><path d="M124.4 70.0 l1.7 -1.7 l1.7 1.7 l-1.7 1.7 Z" fill="#e4e4e4"/><path d="M128.2 70.0 l1.7 -1.7 l1.7 1.7 l-1.7 1.7 Z" fill="#e4e4e4"/><path d="M132.0 70.0 l1.7 -1.7 l1.7 1.7 l-1.7 1.7 Z" fill="#e4e4e4"/><path d="M135.8 70.0 l1.7 -1.7 l1.7 1.7 l-1.7 1.7 Z" fill="#e4e4e4"/><path d="M139.6 70.0 l1.7 -1.7 l1.7 1.7 l-1.7 1.7 Z" fill="#e4e4e4"/><path d="M143.4 70.0 l1.7 -1.7 l1.7 1.7 l-1.7 1.7 Z" fill="#e4e4e4"/><path d="M147.2 70.0 l1.7 -1.7 l1.7 1.7 l-1.7 1.7 Z" fill="#e4e4e4"/><path d="M151.0 70.0 l1.7 -1.7 l1.7 1.7 l-1.7 1.7 Z" fill="#e4e4e4"/><path d="M154.8 70.0 l1.7 -1.7 l1.7 1.7 l-1.7 1.7 Z" fill="#e4e4e4"/><path d="M158.6 70.0 l1.7 -1.7 l1.7 1.7 l-1.7 1.7 Z" fill="#e4e4e4"/><path d="M162.4 70.0 l1.7 -1.7 l1.7 1.7 l-1.7 1.7 Z" fill="#e4e4e4"/><path d="M166.2 70.0 l1.7 -1.7 l1.7 1.7 l-1.7 1.7 Z" fill="#e4e4e4"/><path d="M170.0 70.0 l1.7 -1.7 l1.7 1.7 l-1.7 1.7 Z" fill="#e4e4e4"/><path d="M173.8 70.0 l1.7 -1.7 l1.7 1.7 l-1.7 1.7 Z" fill="#e4e4e4"/><path d="M177.6 70.0 l1.7 -1.7 l1.7 1.7 l-1.7 1.7 Z" fill="#e4e4e4"/><path d="M181.4 70.0 l1.7 -1.7 l1.7 1.7 l-1.7 1.7 Z" fill="#e4e4e4"/><path d="M185.2 70.0 l1.7 -1.7 l1.7 1.7 l-1.7 1.7 Z" fill="#e4e4e4"/><path d="M189.0 70.0 l1.7 -1.7 l1.7 1.7 l-1.7 1.7 Z" fill="#e4e4e4"/><path d="M57.9 75.0 l1.3 -1.3 l1.3 1.3 l-1.3 1.3 Z" fill="#e4e4e4"/><path d="M61.7 75.0 l1.3 -1.3 l1.3 1.3 l-1.3 1.3 Z" fill="#e4e4e4"/><path d="M65.5 75.0 l1.3 -1.3 l1.3 1.3 l-1.3 1.3 Z" fill="#e4e4e4"/><path d="M69.3 75.0 l1.3 -1.3 l1.3 1.3 l-1.3 1.3 Z" fill="#e4e4e4"/><path d="M73.1 75.0 l1.3 -1.3 l1.3 1.3 l-1.3 1.3 Z" fill="#e4e4e4"/><path d="M76.9 75.0 l1.3 -1.3 l1.3 1.3 l-1.3 1.3 Z" fill="#e4e4e4"/><path d="M80.7 75.0 l1.3 -1.3 l1.3 1.3 l-1.3 1.3 Z" fill="#e4e4e4"/><path d="M84.5 75.0 l1.3 -1.3 l1.3 1.3 l-1.3 1.3 Z" fill="#e4e4e4"/><path d="M88.3 75.0 l1.3 -1.3 l1.3 1.3 l-1.3 1.3 Z" fill="#e4e4e4"/><path d="M92.1 75.0 l1.3 -1.3 l1.3 1.3 l-1.3 1.3 Z" fill="#e4e4e4"/><path d="M95.9 75.0 l1.3 -1.3 l1.3 1.3 l-1.3 1.3 Z" fill="#e4e4e4"/><path d="M99.7 75.0 l1.3 -1.3 l1.3 1.3 l-1.3 1.3 Z" fill="#e4e4e4"/><path d="M103.5 75.0 l1.3 -1.3 l1.3 1.3 l-1.3 1.3 Z" fill="#e4e4e4"/><path d="M107.3 75.0 l1.3 -1.3 l1.3 1.3 l-1.3 1.3 Z" fill="#e4e4e4"/><path d="M111.1 75.0 l1.3 -1.3 l1.3 1.3 l-1.3 1.3 Z" fill="#e4e4e4"/><path d="M114.9 75.0 l1.3 -1.3 l1.3 1.3 l-1.3 1.3 Z" fill="#e4e4e4"/><path d="M118.7 75.0 l1.3 -1.3 l1.3 1.3 l-1.3 1.3 Z" fill="#e4e4e4"/><path d="M122.5 75.0 l1.3 -1.3 l1.3 1.3 l-1.3 1.3 Z" fill="#e4e4e4"/><path d="M126.3 75.0 l1.3 -1.3 l1.3 1.3 l-1.3 1.3 Z" fill="#e4e4e4"/><path d="M130.1 75.0 l1.3 -1.3 l1.3 1.3 l-1.3 1.3 Z" fill="#e4e4e4"/><path d="M133.9 75.0 l1.3 -1.3 l1.3 1.3 l-1.3 1.3 Z" fill="#e4e4e4"/><path d="M137.7 75.0 l1.3 -1.3 l1.3 1.3 l-1.3 1.3 Z" fill="#e4e4e4"/><path d="M141.5 75.0 l1.3 -1.3 l1.3 1.3 l-1.3 1.3 Z" fill="#e4e4e4"/><path d="M145.3 75.0 l1.3 -1.3 l1.3 1.3 l-1.3 1.3 Z" fill="#e4e4e4"/><path d="M149.1 75.0 l1.3 -1.3 l1.3 1.3 l-1.3 1.3 Z" fill="#e4e4e4"/><path d="M152.9 75.0 l1.3 -1.3 l1.3 1.3 l-1.3 1.3 Z" fill="#e4e4e4"/><path d="M156.7 75.0 l1.3 -1.3 l1.3 1.3 l-1.3 1.3 Z" fill="#e4e4e4"/><path d="M160.5 75.0 l1.3 -1.3 l1.3 1.3 l-1.3 1.3 Z" fill="#e4e4e4"/><path d="M164.3 75.0 l1.3 -1.3 l1.3 1.3 l-1.3 1.3 Z" fill="#e4e4e4"/><path d="M168.1 75.0 l1.3 -1.3 l1.3 1.3 l-1.3 1.3 Z" fill="#e4e4e4"/><path d="M171.9 75.0 l1.3 -1.3 l1.3 1.3 l-1.3 1.3 Z" fill="#e4e4e4"/><path d="M175.7 75.0 l1.3 -1.3 l1.3 1.3 l-1.3 1.3 Z" fill="#e4e4e4"/><path d="M179.5 75.0 l1.3 -1.3 l1.3 1.3 l-1.3 1.3 Z" fill="#e4e4e4"/><path d="M183.3 75.0 l1.3 -1.3 l1.3 1.3 l-1.3 1.3 Z" fill="#e4e4e4"/><path d="M187.1 75.0 l1.3 -1.3 l1.3 1.3 l-1.3 1.3 Z" fill="#e4e4e4"/><path d="M190.9 75.0 l1.3 -1.3 l1.3 1.3 l-1.3 1.3 Z" fill="#e4e4e4"/><path d="M56.0 80.0 l1.7 -1.7 l1.7 1.7 l-1.7 1.7 Z" fill="#e4e4e4"/><path d="M59.8 80.0 l1.7 -1.7 l1.7 1.7 l-1.7 1.7 Z" fill="#e4e4e4"/><path d="M63.6 80.0 l1.7 -1.7 l1.7 1.7 l-1.7 1.7 Z" fill="#e4e4e4"/><path d="M67.4 80.0 l1.7 -1.7 l1.7 1.7 l-1.7 1.7 Z" fill="#e4e4e4"/><path d="M71.2 80.0 l1.7 -1.7 l1.7 1.7 l-1.7 1.7 Z" fill="#e4e4e4"/><path d="M75.0 80.0 l1.7 -1.7 l1.7 1.7 l-1.7 1.7 Z" fill="#e4e4e4"/><path d="M78.8 80.0 l1.7 -1.7 l1.7 1.7 l-1.7 1.7 Z" fill="#e4e4e4"/><path d="M82.6 80.0 l1.7 -1.7 l1.7 1.7 l-1.7 1.7 Z" fill="#e4e4e4"/><path d="M86.4 80.0 l1.7 -1.7 l1.7 1.7 l-1.7 1.7 Z" fill="#e4e4e4"/><path d="M90.2 80.0 l1.7 -1.7 l1.7 1.7 l-1.7 1.7 Z" fill="#e4e4e4"/><path d="M94.0 80.0 l1.7 -1.7 l1.7 1.7 l-1.7 1.7 Z" fill="#e4e4e4"/><path d="M97.8 80.0 l1.7 -1.7 l1.7 1.7 l-1.7 1.7 Z" fill="#e4e4e4"/><path d="M101.6 80.0 l1.7 -1.7 l1.7 1.7 l-1.7 1.7 Z" fill="#e4e4e4"/><path d="M105.4 80.0 l1.7 -1.7 l1.7 1.7 l-1.7 1.7 Z" fill="#e4e4e4"/><path d="M109.2 80.0 l1.7 -1.7 l1.7 1.7 l-1.7 1.7 Z" fill="#e4e4e4"/><path d="M113.0 80.0 l1.7 -1.7 l1.7 1.7 l-1.7 1.7 Z" fill="#e4e4e4"/><path d="M116.8 80.0 l1.7 -1.7 l1.7 1.7 l-1.7 1.7 Z" fill="#e4e4e4"/><path d="M120.6 80.0 l1.7 -1.7 l1.7 1.7 l-1.7 1.7 Z" fill="#e4e4e4"/><path d="M124.4 80.0 l1.7 -1.7 l1.7 1.7 l-1.7 1.7 Z" fill="#e4e4e4"/><path d="M128.2 80.0 l1.7 -1.7 l1.7 1.7 l-1.7 1.7 Z" fill="#e4e4e4"/><path d="M132.0 80.0 l1.7 -1.7 l1.7 1.7 l-1.7 1.7 Z" fill="#e4e4e4"/><path d="M135.8 80.0 l1.7 -1.7 l1.7 1.7 l-1.7 1.7 Z" fill="#e4e4e4"/><path d="M139.6 80.0 l1.7 -1.7 l1.7 1.7 l-1.7 1.7 Z" fill="#e4e4e4"/><path d="M143.4 80.0 l1.7 -1.7 l1.7 1.7 l-1.7 1.7 Z" fill="#e4e4e4"/><path d="M147.2 80.0 l1.7 -1.7 l1.7 1.7 l-1.7 1.7 Z" fill="#e4e4e4"/><path d="M151.0 80.0 l1.7 -1.7 l1.7 1.7 l-1.7 1.7 Z" fill="#e4e4e4"/><path d="M154.8 80.0 l1.7 -1.7 l1.7 1.7 l-1.7 1.7 Z" fill="#e4e4e4"/><path d="M158.6 80.0 l1.7 -1.7 l1.7 1.7 l-1.7 1.7 Z" fill="#e4e4e4"/><path d="M162.4 80.0 l1.7 -1.7 l1.7 1.7 l-1.7 1.7 Z" fill="#e4e4e4"/><path d="M166.2 80.0 l1.7 -1.7 l1.7 1.7 l-1.7 1.7 Z" fill="#e4e4e4"/><path d="M170.0 80.0 l1.7 -1.7 l1.7 1.7 l-1.7 1.7 Z" fill="#e4e4e4"/><path d="M173.8 80.0 l1.7 -1.7 l1.7 1.7 l-1.7 1.7 Z" fill="#e4e4e4"/><path d="M177.6 80.0 l1.7 -1.7 l1.7 1.7 l-1.7 1.7 Z" fill="#e4e4e4"/><path d="M181.4 80.0 l1.7 -1.7 l1.7 1.7 l-1.7 1.7 Z" fill="#e4e4e4"/><path d="M185.2 80.0 l1.7 -1.7 l1.7 1.7 l-1.7 1.7 Z" fill="#e4e4e4"/><path d="M189.0 80.0 l1.7 -1.7 l1.7 1.7 l-1.7 1.7 Z" fill="#e4e4e4"/><rect x="57.9" y="84.8" width="2.2" height="1.4" fill="#e0e0e0"/><rect x="61.7" y="84.8" width="2.2" height="1.4" fill="#e0e0e0"/><rect x="65.5" y="84.8" width="2.2" height="1.4" fill="#e0e0e0"/><rect x="69.3" y="84.8" width="2.2" height="1.4" fill="#e0e0e0"/><rect x="73.1" y="84.8" width="2.2" height="1.4" fill="#e0e0e0"/><rect x="76.9" y="84.8" width="2.2" height="1.4" fill="#e0e0e0"/><rect x="80.7" y="84.8" width="2.2" height="1.4" fill="#e0e0e0"/><rect x="84.5" y="84.8" width="2.2" height="1.4" fill="#e0e0e0"/><rect x="88.3" y="84.8" width="2.2" height="1.4" fill="#e0e0e0"/><rect x="92.1" y="84.8" width="2.2" height="1.4" fill="#e0e0e0"/><rect x="95.9" y="84.8" width="2.2" height="1.4" fill="#e0e0e0"/><rect x="99.7" y="84.8" width="2.2" height="1.4" fill="#e0e0e0"/><rect x="103.5" y="84.8" width="2.2" height="1.4" fill="#e0e0e0"/><rect x="107.3" y="84.8" width="2.2" height="1.4" fill="#e0e0e0"/><rect x="111.1" y="84.8" width="2.2" height="1.4" fill="#e0e0e0"/><rect x="114.9" y="84.8" width="2.2" height="1.4" fill="#e0e0e0"/><rect x="118.7" y="84.8" width="2.2" height="1.4" fill="#e0e0e0"/><rect x="122.5" y="84.8" width="2.2" height="1.4" fill="#e0e0e0"/><rect x="126.3" y="84.8" width="2.2" height="1.4" fill="#e0e0e0"/><rect x="130.1" y="84.8" width="2.2" height="1.4" fill="#e0e0e0"/><rect x="133.9" y="84.8" width="2.2" height="1.4" fill="#e0e0e0"/><rect x="137.7" y="84.8" width="2.2" height="1.4" fill="#e0e0e0"/><rect x="141.5" y="84.8" width="2.2" height="1.4" fill="#e0e0e0"/><rect x="145.3" y="84.8" width="2.2" height="1.4" fill="#e0e0e0"/><rect x="149.1" y="84.8" width="2.2" height="1.4" fill="#e0e0e0"/><rect x="152.9" y="84.8" width="2.2" height="1.4" fill="#e0e0e0"/><rect x="156.7" y="84.8" width="2.2" height="1.4" fill="#e0e0e0"/><rect x="160.5" y="84.8" width="2.2" height="1.4" fill="#e0e0e0"/><rect x="164.3" y="84.8" width="2.2" height="1.4" fill="#e0e0e0"/><rect x="168.1" y="84.8" width="2.2" height="1.4" fill="#e0e0e0"/><rect x="171.9" y="84.8" width="2.2" height="1.4" fill="#e0e0e0"/><rect x="175.7" y="84.8" width="2.2" height="1.4" fill="#e0e0e0"/><rect x="179.5" y="84.8" width="2.2" height="1.4" fill="#e0e0e0"/><rect x="183.3" y="84.8" width="2.2" height="1.4" fill="#e0e0e0"/><rect x="187.1" y="84.8" width="2.2" height="1.4" fill="#e0e0e0"/><rect x="190.9" y="84.8" width="2.2" height="1.4" fill="#e0e0e0"/><path d="M56.0 90.0 l1.7 -1.7 l1.7 1.7 l-1.7 1.7 Z" fill="#e4e4e4"/><path d="M59.8 90.0 l1.7 -1.7 l1.7 1.7 l-1.7 1.7 Z" fill="#e4e4e4"/><path d="M63.6 90.0 l1.7 -1.7 l1.7 1.7 l-1.7 1.7 Z" fill="#e4e4e4"/><path d="M67.4 90.0 l1.7 -1.7 l1.7 1.7 l-1.7 1.7 Z" fill="#e4e4e4"/><path d="M71.2 90.0 l1.7 -1.7 l1.7 1.7 l-1.7 1.7 Z" fill="#e4e4e4"/><path d="M75.0 90.0 l1.7 -1.7 l1.7 1.7 l-1.7 1.7 Z" fill="#e4e4e4"/><path d="M78.8 90.0 l1.7 -1.7 l1.7 1.7 l-1.7 1.7 Z" fill="#e4e4e4"/><path d="M82.6 90.0 l1.7 -1.7 l1.7 1.7 l-1.7 1.7 Z" fill="#e4e4e4"/><path d="M86.4 90.0 l1.7 -1.7 l1.7 1.7 l-1.7 1.7 Z" fill="#e4e4e4"/><path d="M90.2 90.0 l1.7 -1.7 l1.7 1.7 l-1.7 1.7 Z" fill="#e4e4e4"/><path d="M94.0 90.0 l1.7 -1.7 l1.7 1.7 l-1.7 1.7 Z" fill="#e4e4e4"/><path d="M97.8 90.0 l1.7 -1.7 l1.7 1.7 l-1.7 1.7 Z" fill="#e4e4e4"/><path d="M101.6 90.0 l1.7 -1.7 l1.7 1.7 l-1.7 1.7 Z" fill="#e4e4e4"/><path d="M105.4 90.0 l1.7 -1.7 l1.7 1.7 l-1.7 1.7 Z" fill="#e4e4e4"/><path d="M109.2 90.0 l1.7 -1.7 l1.7 1.7 l-1.7 1.7 Z" fill="#e4e4e4"/><path d="M113.0 90.0 l1.7 -1.7 l1.7 1.7 l-1.7 1.7 Z" fill="#e4e4e4"/><path d="M116.8 90.0 l1.7 -1.7 l1.7 1.7 l-1.7 1.7 Z" fill="#e4e4e4"/><path d="M120.6 90.0 l1.7 -1.7 l1.7 1.7 l-1.7 1.7 Z" fill="#e4e4e4"/><path d="M124.4 90.0 l1.7 -1.7 l1.7 1.7 l-1.7 1.7 Z" fill="#e4e4e4"/><path d="M128.2 90.0 l1.7 -1.7 l1.7 1.7 l-1.7 1.7 Z" fill="#e4e4e4"/><path d="M132.0 90.0 l1.7 -1.7 l1.7 1.7 l-1.7 1.7 Z" fill="#e4e4e4"/><path d="M135.8 90.0 l1.7 -1.7 l1.7 1.7 l-1.7 1.7 Z" fill="#e4e4e4"/><path d="M139.6 90.0 l1.7 -1.7 l1.7 1.7 l-1.7 1.7 Z" fill="#e4e4e4"/><path d="M143.4 90.0 l1.7 -1.7 l1.7 1.7 l-1.7 1.7 Z" fill="#e4e4e4"/><path d="M147.2 90.0 l1.7 -1.7 l1.7 1.7 l-1.7 1.7 Z" fill="#e4e4e4"/><path d="M151.0 90.0 l1.7 -1.7 l1.7 1.7 l-1.7 1.7 Z" fill="#e4e4e4"/><path d="M154.8 90.0 l1.7 -1.7 l1.7 1.7 l-1.7 1.7 Z" fill="#e4e4e4"/><path d="M158.6 90.0 l1.7 -1.7 l1.7 1.7 l-1.7 1.7 Z" fill="#e4e4e4"/><path d="M162.4 90.0 l1.7 -1.7 l1.7 1.7 l-1.7 1.7 Z" fill="#e4e4e4"/><path d="M166.2 90.0 l1.7 -1.7 l1.7 1.7 l-1.7 1.7 Z" fill="#e4e4e4"/><path d="M170.0 90.0 l1.7 -1.7 l1.7 1.7 l-1.7 1.7 Z" fill="#e4e4e4"/><path d="M173.8 90.0 l1.7 -1.7 l1.7 1.7 l-1.7 1.7 Z" fill="#e4e4e4"/><path d="M177.6 90.0 l1.7 -1.7 l1.7 1.7 l-1.7 1.7 Z" fill="#e4e4e4"/><path d="M181.4 90.0 l1.7 -1.7 l1.7 1.7 l-1.7 1.7 Z" fill="#e4e4e4"/><path d="M185.2 90.0 l1.7 -1.7 l1.7 1.7 l-1.7 1.7 Z" fill="#e4e4e4"/><path d="M189.0 90.0 l1.7 -1.7 l1.7 1.7 l-1.7 1.7 Z" fill="#e4e4e4"/><path d="M57.9 95.0 l1.3 -1.3 l1.3 1.3 l-1.3 1.3 Z" fill="#e4e4e4"/><path d="M61.7 95.0 l1.3 -1.3 l1.3 1.3 l-1.3 1.3 Z" fill="#e4e4e4"/><path d="M65.5 95.0 l1.3 -1.3 l1.3 1.3 l-1.3 1.3 Z" fill="#e4e4e4"/><path d="M69.3 95.0 l1.3 -1.3 l1.3 1.3 l-1.3 1.3 Z" fill="#e4e4e4"/><path d="M73.1 95.0 l1.3 -1.3 l1.3 1.3 l-1.3 1.3 Z" fill="#e4e4e4"/><path d="M76.9 95.0 l1.3 -1.3 l1.3 1.3 l-1.3 1.3 Z" fill="#e4e4e4"/><path d="M80.7 95.0 l1.3 -1.3 l1.3 1.3 l-1.3 1.3 Z" fill="#e4e4e4"/><path d="M84.5 95.0 l1.3 -1.3 l1.3 1.3 l-1.3 1.3 Z" fill="#e4e4e4"/><path d="M88.3 95.0 l1.3 -1.3 l1.3 1.3 l-1.3 1.3 Z" fill="#e4e4e4"/><path d="M92.1 95.0 l1.3 -1.3 l1.3 1.3 l-1.3 1.3 Z" fill="#e4e4e4"/><path d="M95.9 95.0 l1.3 -1.3 l1.3 1.3 l-1.3 1.3 Z" fill="#e4e4e4"/><path d="M99.7 95.0 l1.3 -1.3 l1.3 1.3 l-1.3 1.3 Z" fill="#e4e4e4"/><path d="M103.5 95.0 l1.3 -1.3 l1.3 1.3 l-1.3 1.3 Z" fill="#e4e4e4"/><path d="M107.3 95.0 l1.3 -1.3 l1.3 1.3 l-1.3 1.3 Z" fill="#e4e4e4"/><path d="M111.1 95.0 l1.3 -1.3 l1.3 1.3 l-1.3 1.3 Z" fill="#e4e4e4"/><path d="M114.9 95.0 l1.3 -1.3 l1.3 1.3 l-1.3 1.3 Z" fill="#e4e4e4"/><path d="M118.7 95.0 l1.3 -1.3 l1.3 1.3 l-1.3 1.3 Z" fill="#e4e4e4"/><path d="M122.5 95.0 l1.3 -1.3 l1.3 1.3 l-1.3 1.3 Z" fill="#e4e4e4"/><path d="M126.3 95.0 l1.3 -1.3 l1.3 1.3 l-1.3 1.3 Z" fill="#e4e4e4"/><path d="M130.1 95.0 l1.3 -1.3 l1.3 1.3 l-1.3 1.3 Z" fill="#e4e4e4"/><path d="M133.9 95.0 l1.3 -1.3 l1.3 1.3 l-1.3 1.3 Z" fill="#e4e4e4"/><path d="M137.7 95.0 l1.3 -1.3 l1.3 1.3 l-1.3 1.3 Z" fill="#e4e4e4"/><path d="M141.5 95.0 l1.3 -1.3 l1.3 1.3 l-1.3 1.3 Z" fill="#e4e4e4"/><path d="M145.3 95.0 l1.3 -1.3 l1.3 1.3 l-1.3 1.3 Z" fill="#e4e4e4"/><path d="M149.1 95.0 l1.3 -1.3 l1.3 1.3 l-1.3 1.3 Z" fill="#e4e4e4"/><path d="M152.9 95.0 l1.3 -1.3 l1.3 1.3 l-1.3 1.3 Z" fill="#e4e4e4"/><path d="M156.7 95.0 l1.3 -1.3 l1.3 1.3 l-1.3 1.3 Z" fill="#e4e4e4"/><path d="M160.5 95.0 l1.3 -1.3 l1.3 1.3 l-1.3 1.3 Z" fill="#e4e4e4"/><path d="M164.3 95.0 l1.3 -1.3 l1.3 1.3 l-1.3 1.3 Z" fill="#e4e4e4"/><path d="M168.1 95.0 l1.3 -1.3 l1.3 1.3 l-1.3 1.3 Z" fill="#e4e4e4"/><path d="M171.9 95.0 l1.3 -1.3 l1.3 1.3 l-1.3 1.3 Z" fill="#e4e4e4"/><path d="M175.7 95.0 l1.3 -1.3 l1.3 1.3 l-1.3 1.3 Z" fill="#e4e4e4"/><path d="M179.5 95.0 l1.3 -1.3 l1.3 1.3 l-1.3 1.3 Z" fill="#e4e4e4"/><path d="M183.3 95.0 l1.3 -1.3 l1.3 1.3 l-1.3 1.3 Z" fill="#e4e4e4"/><path d="M187.1 95.0 l1.3 -1.3 l1.3 1.3 l-1.3 1.3 Z" fill="#e4e4e4"/><path d="M190.9 95.0 l1.3 -1.3 l1.3 1.3 l-1.3 1.3 Z" fill="#e4e4e4"/><path d="M56.0 100.0 l1.7 -1.7 l1.7 1.7 l-1.7 1.7 Z" fill="#e4e4e4"/><path d="M59.8 100.0 l1.7 -1.7 l1.7 1.7 l-1.7 1.7 Z" fill="#e4e4e4"/><path d="M63.6 100.0 l1.7 -1.7 l1.7 1.7 l-1.7 1.7 Z" fill="#e4e4e4"/><path d="M67.4 100.0 l1.7 -1.7 l1.7 1.7 l-1.7 1.7 Z" fill="#e4e4e4"/><path d="M71.2 100.0 l1.7 -1.7 l1.7 1.7 l-1.7 1.7 Z" fill="#e4e4e4"/><path d="M75.0 100.0 l1.7 -1.7 l1.7 1.7 l-1.7 1.7 Z" fill="#e4e4e4"/><path d="M78.8 100.0 l1.7 -1.7 l1.7 1.7 l-1.7 1.7 Z" fill="#e4e4e4"/><path d="M82.6 100.0 l1.7 -1.7 l1.7 1.7 l-1.7 1.7 Z" fill="#e4e4e4"/><path d="M86.4 100.0 l1.7 -1.7 l1.7 1.7 l-1.7 1.7 Z" fill="#e4e4e4"/><path d="M90.2 100.0 l1.7 -1.7 l1.7 1.7 l-1.7 1.7 Z" fill="#e4e4e4"/><path d="M94.0 100.0 l1.7 -1.7 l1.7 1.7 l-1.7 1.7 Z" fill="#e4e4e4"/><path d="M97.8 100.0 l1.7 -1.7 l1.7 1.7 l-1.7 1.7 Z" fill="#e4e4e4"/><path d="M101.6 100.0 l1.7 -1.7 l1.7 1.7 l-1.7 1.7 Z" fill="#e4e4e4"/><path d="M105.4 100.0 l1.7 -1.7 l1.7 1.7 l-1.7 1.7 Z" fill="#e4e4e4"/><path d="M109.2 100.0 l1.7 -1.7 l1.7 1.7 l-1.7 1.7 Z" fill="#e4e4e4"/><path d="M113.0 100.0 l1.7 -1.7 l1.7 1.7 l-1.7 1.7 Z" fill="#e4e4e4"/><path d="M116.8 100.0 l1.7 -1.7 l1.7 1.7 l-1.7 1.7 Z" fill="#e4e4e4"/><path d="M120.6 100.0 l1.7 -1.7 l1.7 1.7 l-1.7 1.7 Z" fill="#e4e4e4"/><path d="M124.4 100.0 l1.7 -1.7 l1.7 1.7 l-1.7 1.7 Z" fill="#e4e4e4"/><path d="M128.2 100.0 l1.7 -1.7 l1.7 1.7 l-1.7 1.7 Z" fill="#e4e4e4"/><path d="M132.0 100.0 l1.7 -1.7 l1.7 1.7 l-1.7 1.7 Z" fill="#e4e4e4"/><path d="M135.8 100.0 l1.7 -1.7 l1.7 1.7 l-1.7 1.7 Z" fill="#e4e4e4"/><path d="M139.6 100.0 l1.7 -1.7 l1.7 1.7 l-1.7 1.7 Z" fill="#e4e4e4"/><path d="M143.4 100.0 l1.7 -1.7 l1.7 1.7 l-1.7 1.7 Z" fill="#e4e4e4"/><path d="M147.2 100.0 l1.7 -1.7 l1.7 1.7 l-1.7 1.7 Z" fill="#e4e4e4"/><path d="M151.0 100.0 l1.7 -1.7 l1.7 1.7 l-1.7 1.7 Z" fill="#e4e4e4"/><path d="M154.8 100.0 l1.7 -1.7 l1.7 1.7 l-1.7 1.7 Z" fill="#e4e4e4"/><path d="M158.6 100.0 l1.7 -1.7 l1.7 1.7 l-1.7 1.7 Z" fill="#e4e4e4"/><path d="M162.4 100.0 l1.7 -1.7 l1.7 1.7 l-1.7 1.7 Z" fill="#e4e4e4"/><path d="M166.2 100.0 l1.7 -1.7 l1.7 1.7 l-1.7 1.7 Z" fill="#e4e4e4"/><path d="M170.0 100.0 l1.7 -1.7 l1.7 1.7 l-1.7 1.7 Z" fill="#e4e4e4"/><path d="M173.8 100.0 l1.7 -1.7 l1.7 1.7 l-1.7 1.7 Z" fill="#e4e4e4"/><path d="M177.6 100.0 l1.7 -1.7 l1.7 1.7 l-1.7 1.7 Z" fill="#e4e4e4"/><path d="M181.4 100.0 l1.7 -1.7 l1.7 1.7 l-1.7 1.7 Z" fill="#e4e4e4"/><path d="M185.2 100.0 l1.7 -1.7 l1.7 1.7 l-1.7 1.7 Z" fill="#e4e4e4"/><path d="M189.0 100.0 l1.7 -1.7 l1.7 1.7 l-1.7 1.7 Z" fill="#e4e4e4"/><rect x="57.9" y="104.8" width="2.2" height="1.4" fill="#e0e0e0"/><rect x="61.7" y="104.8" width="2.2" height="1.4" fill="#e0e0e0"/><rect x="65.5" y="104.8" width="2.2" height="1.4" fill="#e0e0e0"/><rect x="69.3" y="104.8" width="2.2" height="1.4" fill="#e0e0e0"/><rect x="73.1" y="104.8" width="2.2" height="1.4" fill="#e0e0e0"/><rect x="76.9" y="104.8" width="2.2" height="1.4" fill="#e0e0e0"/><rect x="80.7" y="104.8" width="2.2" height="1.4" fill="#e0e0e0"/><rect x="84.5" y="104.8" width="2.2" height="1.4" fill="#e0e0e0"/><rect x="88.3" y="104.8" width="2.2" height="1.4" fill="#e0e0e0"/><rect x="92.1" y="104.8" width="2.2" height="1.4" fill="#e0e0e0"/><rect x="95.9" y="104.8" width="2.2" height="1.4" fill="#e0e0e0"/><rect x="99.7" y="104.8" width="2.2" height="1.4" fill="#e0e0e0"/><rect x="103.5" y="104.8" width="2.2" height="1.4" fill="#e0e0e0"/><rect x="107.3" y="104.8" width="2.2" height="1.4" fill="#e0e0e0"/><rect x="111.1" y="104.8" width="2.2" height="1.4" fill="#e0e0e0"/><rect x="114.9" y="104.8" width="2.2" height="1.4" fill="#e0e0e0"/><rect x="118.7" y="104.8" width="2.2" height="1.4" fill="#e0e0e0"/><rect x="122.5" y="104.8" width="2.2" height="1.4" fill="#e0e0e0"/><rect x="126.3" y="104.8" width="2.2" height="1.4" fill="#e0e0e0"/><rect x="130.1" y="104.8" width="2.2" height="1.4" fill="#e0e0e0"/><rect x="133.9" y="104.8" width="2.2" height="1.4" fill="#e0e0e0"/><rect x="137.7" y="104.8" width="2.2" height="1.4" fill="#e0e0e0"/><rect x="141.5" y="104.8" width="2.2" height="1.4" fill="#e0e0e0"/><rect x="145.3" y="104.8" width="2.2" height="1.4" fill="#e0e0e0"/><rect x="149.1" y="104.8" width="2.2" height="1.4" fill="#e0e0e0"/><rect x="152.9" y="104.8" width="2.2" height="1.4" fill="#e0e0e0"/><rect x="156.7" y="104.8" width="2.2" height="1.4" fill="#e0e0e0"/><rect x="160.5" y="104.8" width="2.2" height="1.4" fill="#e0e0e0"/><rect x="164.3" y="104.8" width="2.2" height="1.4" fill="#e0e0e0"/><rect x="168.1" y="104.8" width="2.2" height="1.4" fill="#e0e0e0"/><rect x="171.9" y="104.8" width="2.2" height="1.4" fill="#e0e0e0"/><rect x="175.7" y="104.8" width="2.2" height="1.4" fill="#e0e0e0"/><rect x="179.5" y="104.8" width="2.2" height="1.4" fill="#e0e0e0"/><rect x="183.3" y="104.8" width="2.2" height="1.4" fill="#e0e0e0"/><rect x="187.1" y="104.8" width="2.2" height="1.4" fill="#e0e0e0"/><rect x="190.9" y="104.8" width="2.2" height="1.4" fill="#e0e0e0"/><path d="M56.0 110.0 l1.7 -1.7 l1.7 1.7 l-1.7 1.7 Z" fill="#e4e4e4"/><path d="M59.8 110.0 l1.7 -1.7 l1.7 1.7 l-1.7 1.7 Z" fill="#e4e4e4"/><path d="M63.6 110.0 l1.7 -1.7 l1.7 1.7 l-1.7 1.7 Z" fill="#e4e4e4"/><path d="M67.4 110.0 l1.7 -1.7 l1.7 1.7 l-1.7 1.7 Z" fill="#e4e4e4"/><path d="M71.2 110.0 l1.7 -1.7 l1.7 1.7 l-1.7 1.7 Z" fill="#e4e4e4"/><path d="M75.0 110.0 l1.7 -1.7 l1.7 1.7 l-1.7 1.7 Z" fill="#e4e4e4"/><path d="M78.8 110.0 l1.7 -1.7 l1.7 1.7 l-1.7 1.7 Z" fill="#e4e4e4"/><path d="M82.6 110.0 l1.7 -1.7 l1.7 1.7 l-1.7 1.7 Z" fill="#e4e4e4"/><path d="M86.4 110.0 l1.7 -1.7 l1.7 1.7 l-1.7 1.7 Z" fill="#e4e4e4"/><path d="M90.2 110.0 l1.7 -1.7 l1.7 1.7 l-1.7 1.7 Z" fill="#e4e4e4"/><path d="M94.0 110.0 l1.7 -1.7 l1.7 1.7 l-1.7 1.7 Z" fill="#e4e4e4"/><path d="M97.8 110.0 l1.7 -1.7 l1.7 1.7 l-1.7 1.7 Z" fill="#e4e4e4"/><path d="M101.6 110.0 l1.7 -1.7 l1.7 1.7 l-1.7 1.7 Z" fill="#e4e4e4"/><path d="M105.4 110.0 l1.7 -1.7 l1.7 1.7 l-1.7 1.7 Z" fill="#e4e4e4"/><path d="M109.2 110.0 l1.7 -1.7 l1.7 1.7 l-1.7 1.7 Z" fill="#e4e4e4"/><path d="M113.0 110.0 l1.7 -1.7 l1.7 1.7 l-1.7 1.7 Z" fill="#e4e4e4"/><path d="M116.8 110.0 l1.7 -1.7 l1.7 1.7 l-1.7 1.7 Z" fill="#e4e4e4"/><path d="M120.6 110.0 l1.7 -1.7 l1.7 1.7 l-1.7 1.7 Z" fill="#e4e4e4"/><path d="M124.4 110.0 l1.7 -1.7 l1.7 1.7 l-1.7 1.7 Z" fill="#e4e4e4"/><path d="M128.2 110.0 l1.7 -1.7 l1.7 1.7 l-1.7 1.7 Z" fill="#e4e4e4"/><path d="M132.0 110.0 l1.7 -1.7 l1.7 1.7 l-1.7 1.7 Z" fill="#e4e4e4"/><path d="M135.8 110.0 l1.7 -1.7 l1.7 1.7 l-1.7 1.7 Z" fill="#e4e4e4"/><path d="M139.6 110.0 l1.7 -1.7 l1.7 1.7 l-1.7 1.7 Z" fill="#e4e4e4"/><path d="M143.4 110.0 l1.7 -1.7 l1.7 1.7 l-1.7 1.7 Z" fill="#e4e4e4"/><path d="M147.2 110.0 l1.7 -1.7 l1.7 1.7 l-1.7 1.7 Z" fill="#e4e4e4"/><path d="M151.0 110.0 l1.7 -1.7 l1.7 1.7 l-1.7 1.7 Z" fill="#e4e4e4"/><path d="M154.8 110.0 l1.7 -1.7 l1.7 1.7 l-1.7 1.7 Z" fill="#e4e4e4"/><path d="M158.6 110.0 l1.7 -1.7 l1.7 1.7 l-1.7 1.7 Z" fill="#e4e4e4"/><path d="M162.4 110.0 l1.7 -1.7 l1.7 1.7 l-1.7 1.7 Z" fill="#e4e4e4"/><path d="M166.2 110.0 l1.7 -1.7 l1.7 1.7 l-1.7 1.7 Z" fill="#e4e4e4"/><path d="M170.0 110.0 l1.7 -1.7 l1.7 1.7 l-1.7 1.7 Z" fill="#e4e4e4"/><path d="M173.8 110.0 l1.7 -1.7 l1.7 1.7 l-1.7 1.7 Z" fill="#e4e4e4"/><path d="M177.6 110.0 l1.7 -1.7 l1.7 1.7 l-1.7 1.7 Z" fill="#e4e4e4"/><path d="M181.4 110.0 l1.7 -1.7 l1.7 1.7 l-1.7 1.7 Z" fill="#e4e4e4"/><path d="M185.2 110.0 l1.7 -1.7 l1.7 1.7 l-1.7 1.7 Z" fill="#e4e4e4"/><path d="M189.0 110.0 l1.7 -1.7 l1.7 1.7 l-1.7 1.7 Z" fill="#e4e4e4"/></g><path d="M100 58 L112 76 L136 78 L142 70 L130 62 Z" fill="#c8d0ea"/><path d="M104 64 C110 74 130 78 142 72 L140 79 C126 84 108 80 100 70 Z" fill="#141826"/><path d="M106 28 C104 14 114 6 128 6 C144 6 154 16 153 34 C152 52 146 66 130 68 C116 68 108 52 106 28 Z" fill="#c89c80"/><path d="M96 34 C94 12 106 1 124 1 C136 1 146 5 149 13 C137 10 123 10 113 18 C109 24 107 30 106 38 Z" fill="#222226"/><path d="M111 29.5 H154" stroke="#8a8488" stroke-width="0.9"/><rect x="118" y="27.5" width="12" height="5" fill="none" stroke="#8a8488" stroke-width="0.7"/><rect x="136" y="27.5" width="14" height="5" fill="none" stroke="#8a8488" stroke-width="0.7"/><ellipse cx="142" cy="53" rx="4" ry="2.2" fill="#5a3a34"/><path d="M97 36 C92 12 110 -2 130 -1" stroke="#161618" stroke-width="3.5" fill="none"/><ellipse cx="100.5" cy="40" rx="9.5" ry="12.5" fill="#18181a"/></svg>
<span style="left:1632.8px;top:865.25px;font-size:15px;line-height:15px;color:#fff;transform:scaleX(0.99);text-shadow:0 0 2px #000;">Ji Zhou</span>
<svg style="left:1905.5px;top:154.5px;" width="13" height="75" viewBox="0 0 13 75"><rect x="0.8" y="0.8" width="11" height="73" rx="3.5" fill="#0c0c0c" stroke="#8a8a8a" stroke-width="1.1"/><rect x="2.6" y="16.5" width="8" height="2" rx="0.5" fill="#f7a51e"/><rect x="2.6" y="19.2" width="8" height="1" fill="#e89a20"/><rect x="2.6" y="21.55" width="8" height="2" rx="0.5" fill="#f7a51e"/><rect x="2.6" y="24.25" width="8" height="1" fill="#e89a20"/><rect x="2.6" y="26.6" width="8" height="2" rx="0.5" fill="#f7a51e"/><rect x="2.6" y="29.299999999999997" width="8" height="1" fill="#e89a20"/><rect x="2.6" y="31.65" width="8" height="2" rx="0.5" fill="#f7a51e"/><rect x="2.6" y="34.349999999999994" width="8" height="1" fill="#e89a20"/><rect x="2.6" y="36.7" width="8" height="2" rx="0.5" fill="#f7a51e"/><rect x="2.6" y="39.4" width="8" height="1" fill="#e89a20"/><rect x="2.6" y="41.75" width="8" height="2" rx="0.5" fill="#f7a51e"/><rect x="2.6" y="44.45" width="8" height="1" fill="#e89a20"/><rect x="2.6" y="46.8" width="8" height="2" rx="0.5" fill="#f7a51e"/><rect x="2.6" y="49.5" width="8" height="1" fill="#e89a20"/><rect x="2.6" y="51.85" width="8" height="2" rx="0.5" fill="#f7a51e"/><rect x="2.6" y="54.55" width="8" height="1" fill="#e89a20"/><rect x="2.6" y="56.9" width="8" height="2" rx="0.5" fill="#f7a51e"/><rect x="2.6" y="59.599999999999994" width="8" height="1" fill="#e89a20"/><rect x="2.6" y="61.949999999999996" width="8" height="2" rx="0.5" fill="#f7a51e"/><rect x="2.6" y="64.64999999999999" width="8" height="1" fill="#e89a20"/><rect x="2.6" y="67.0" width="8" height="2" rx="0.5" fill="#f7a51e"/><rect x="2.6" y="69.7" width="8" height="1" fill="#e89a20"/><rect x="3.5" y="71" width="6" height="1" fill="#f7a51e"/></svg>
<div style="left:1584.3px;top:994.4px;width:185px;height:40px;background:#fff;box-shadow:1px 1px 2px rgba(0,0,0,0.6)"></div>
<span style="left:1590.9px;top:999.07px;font-size:14.5px;line-height:14.5px;color:#5a5a5a;transform:scaleX(0.96);">QQ:</span>
<span style="left:1653px;top:999.67px;font-size:13.8px;line-height:13.8px;color:#5a5a5a;transform:scaleX(1.14);">(1037525439)</span>
<svg style="left:1620px;top:998px;overflow:visible" width="36" height="32" viewBox="0 0 36 32"><g fill="none" stroke="#5a5a5a" stroke-width="1" stroke-linecap="square"><path d="M3 4.5 H16"/><path d="M6.5 2.5 V6.5 M12.5 2.5 V6.5"/><path d="M2 7 H17"/><path d="M4 8.5 H15 V13 H4 Z"/><path d="M4 10.7 H15 M9.5 8.5 V13"/><path d="M6 13.5 L4 15 M13 13.5 L16 15"/><path d="M21 2.5 C20.5 6 19.5 10 18.5 14"/><path d="M18 7 H24"/><path d="M23 7 C22.5 11 21 13.5 19 15"/><path d="M19.5 10.5 L24 14"/><path d="M29 2 V3.5"/><path d="M25 4 H33"/><path d="M26.5 5.5 H31.5 V7.5 H26.5 Z"/><path d="M25 10 V9 H33 V10"/><path d="M26 11 H32"/><path d="M29 11 V15 L28 14.5"/></g><g fill="none" stroke="#5a5a5a" stroke-width="1" stroke-linecap="square"><path d="M-25 24.5 H-12 M-18.5 22.5 V26.5 M-24 27 H-13"/><path d="M-5 22.5 V23.5 M-10 24.5 H0 M-8 26 L-7 27 M-2 26 L-3 27 M-10 27.5 H0"/><path d="M9 23.5 H21 M8 27 H22 M12 23.5 V32 M17.5 23.5 V32"/><path d="M30 22 V23.5 M25 24.5 H35 V28 H25 V32"/></g></svg>
<div style="left:1611px;top:1022.5px;width:1.5px;height:1.5px;background:#5a5a5a"></div>
<div style="left:1611px;top:1027px;width:1.5px;height:1.5px;background:#5a5a5a"></div></body></html>
